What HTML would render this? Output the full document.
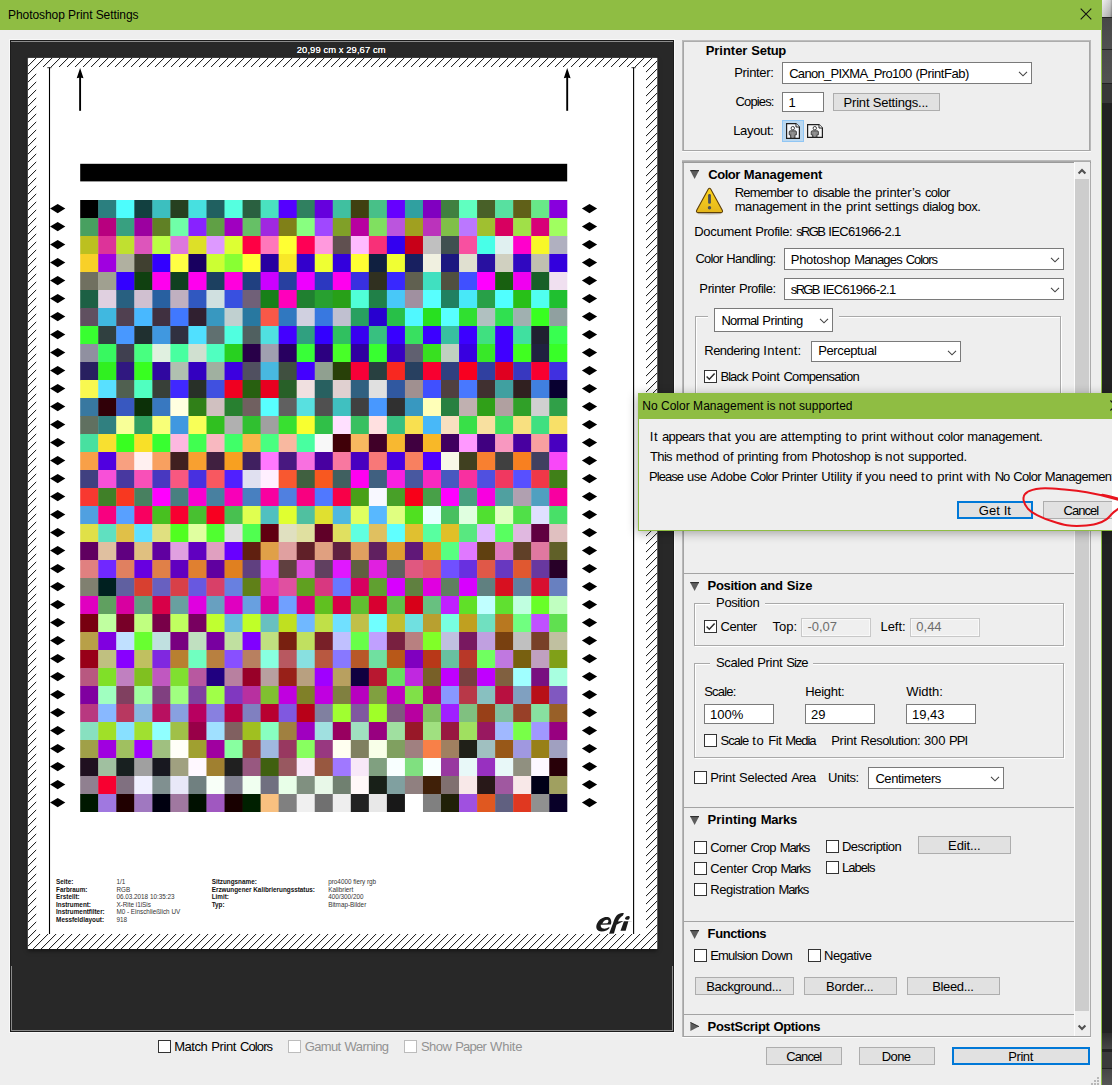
<!DOCTYPE html>
<html><head><meta charset="utf-8"><title>Photoshop Print Settings</title><style>
html,body{margin:0;padding:0;}
body{width:1118px;height:1085px;position:relative;overflow:hidden;background:#fff;font-family:"Liberation Sans",sans-serif;}
.a{position:absolute;display:block;}
.t{position:absolute;white-space:pre;color:#000;font-family:"Liberation Sans",sans-serif;}
</style></head><body>
<div class="a" style="left:0px;top:0px;width:1118px;height:1085px;background:#fff;"></div>
<div class="a" style="left:1102px;top:0px;width:10px;height:1085px;background:#222;"></div>
<div class="a" style="left:1102px;top:0px;width:10px;height:17px;background:linear-gradient(90deg,#e9e9e9,#c4c4c4 80%,#888);"></div>
<div class="a" style="left:1102px;top:0px;width:10px;height:17px;background:linear-gradient(rgba(255,255,255,0.25),rgba(0,0,0,0.12));"></div>
<div class="a" style="left:1102px;top:18px;width:10px;height:31px;background:linear-gradient(#474747,#505050);"></div>
<div class="a" style="left:1102px;top:50px;width:10px;height:33px;background:linear-gradient(#4b4b4b,#525252);"></div>
<div class="a" style="left:1102px;top:84px;width:10px;height:19px;background:#383838;"></div>
<div class="a" style="left:1102px;top:1033px;width:10px;height:16px;background:linear-gradient(#2c2c2c,#464646);"></div>
<div class="a" style="left:1102px;top:1052px;width:10px;height:16px;background:#3a3a3a;"></div>
<div class="a" style="left:1102px;top:1069px;width:10px;height:16px;background:linear-gradient(#454545,#565656);"></div>
<div class="a" style="left:0px;top:0px;width:1102px;height:1085px;background:#8fbd43;"></div>
<div class="a" style="left:0px;top:30px;width:1101px;height:1055px;background:#eeeeee;"></div>
<div class="t" style="left:8.00px;top:7.34px;font-size:12px;line-height:16px;letter-spacing:-0.066px;">Photoshop Print Settings</div>
<svg class="a" style="left:1080px;top:8px" width="12" height="12" viewBox="0 0 12 12"><path d="M0.7 0.7 L11.3 11.3 M11.3 0.7 L0.7 11.3" stroke="#111" stroke-width="1.1" fill="none"/></svg>
<!--PREVIEW-->
<!--RIGHT-->
<!--POPUP-->
<div class="a" style="left:9px;top:39px;width:666px;height:994px;background:#f8f8f8;"></div>
<div class="a" style="left:10px;top:40px;width:664px;height:992px;background:#282828;border:1px solid #1c1c1c;box-sizing:border-box;"></div>
<div class="a" style="left:11px;top:966px;width:1px;height:65px;background:#8a8a8a;"></div>
<div class="a" style="left:672px;top:966px;width:1px;height:65px;background:#8a8a8a;"></div>
<div class="a" style="left:11px;top:1030px;width:662px;height:1px;background:#8a8a8a;"></div>
<div class="a" style="left:11px;top:41px;width:662px;height:1px;background:#8c8c8c;"></div>
<div class="t" style="left:296.80px;top:43.64px;font-size:9.4px;line-height:12px;letter-spacing:0.092px;color:#fff;text-shadow:0 0 0.6px #fff;">20,99 cm x 29,67 cm</div>
<div class="a" style="left:28px;top:58px;width:629px;height:891px;background:#fff;box-shadow:0 2px 4px rgba(0,0,0,0.5);"></div>
<svg class="a" style="left:0;top:0" width="1118" height="1085" viewBox="0 0 1118 1085"><defs><pattern id="h" patternUnits="userSpaceOnUse" width="8" height="8" patternTransform="translate(6.1,0)"><path d="M-1 1 L1 -1 M-1 9 L9 -1 M7 9 L9 7" stroke="#000" stroke-width="0.95" fill="none"/></pattern><clipPath id="pc"><rect x="27.8" y="57.9" width="629.5" height="891"/></clipPath></defs><rect x="27.8" y="57.9" width="629.5" height="891" fill="#fff"/><path clip-path="url(#pc)" fill="url(#h)" fill-rule="evenodd" d="M27.8 57.9 H657.4 V948.9 H27.8 Z M36.2 66.9 V933.9 H646 V66.9 Z"/><path d="M49.5 67.5 V933.9 M633.6 67.5 V933.9" stroke="#000" stroke-width="1.1" fill="none"/><path d="M47.3 67.7 H51.5 M631.5 67.7 H635.7" stroke="#000" stroke-width="0.8" fill="none"/><path d="M80.1 75 V110.8" stroke="#000" stroke-width="1.9" fill="none"/><path d="M80.1 68 L83.5 78.3 L80.1 77.5 L76.69999999999999 78.3 Z" fill="#000"/><path d="M567.2 75 V110.8" stroke="#000" stroke-width="1.9" fill="none"/><path d="M567.2 68 L570.6 78.3 L567.2 77.5 L563.8000000000001 78.3 Z" fill="#000"/><rect x="80.2" y="163.8" width="487" height="17.6" fill="#000"/><rect x="80.20" y="200.00" width="18.44" height="18.40" fill="#000000"/><rect x="98.24" y="200.00" width="18.44" height="18.40" fill="#2b7f7f"/><rect x="116.28" y="200.00" width="18.44" height="18.40" fill="#4dfdfd"/><rect x="134.32" y="200.00" width="18.44" height="18.40" fill="#124040"/><rect x="152.36" y="200.00" width="18.44" height="18.40" fill="#3cbfbf"/><rect x="170.40" y="200.00" width="18.44" height="18.40" fill="#264020"/><rect x="188.44" y="200.00" width="18.44" height="18.40" fill="#47e0e0"/><rect x="206.49" y="200.00" width="18.44" height="18.40" fill="#206060"/><rect x="224.53" y="200.00" width="18.44" height="18.40" fill="#55ffe0"/><rect x="242.57" y="200.00" width="18.44" height="18.40" fill="#2a6040"/><rect x="260.61" y="200.00" width="18.44" height="18.40" fill="#4ae2c0"/><rect x="278.65" y="200.00" width="18.44" height="18.40" fill="#5500ff"/><rect x="296.69" y="200.00" width="18.44" height="18.40" fill="#308060"/><rect x="314.73" y="200.00" width="18.44" height="18.40" fill="#6600dd"/><rect x="332.77" y="200.00" width="18.44" height="18.40" fill="#40c0a0"/><rect x="350.81" y="200.00" width="18.44" height="18.40" fill="#404010"/><rect x="368.85" y="200.00" width="18.44" height="18.40" fill="#48c088"/><rect x="386.89" y="200.00" width="18.44" height="18.40" fill="#6600ff"/><rect x="404.93" y="200.00" width="18.44" height="18.40" fill="#30a0a0"/><rect x="422.97" y="200.00" width="18.44" height="18.40" fill="#8000c0"/><rect x="441.01" y="200.00" width="18.44" height="18.40" fill="#408040"/><rect x="459.06" y="200.00" width="18.44" height="18.40" fill="#60ffc0"/><rect x="477.10" y="200.00" width="18.44" height="18.40" fill="#486028"/><rect x="495.14" y="200.00" width="18.44" height="18.40" fill="#58e0a0"/><rect x="513.18" y="200.00" width="18.44" height="18.40" fill="#606018"/><rect x="531.22" y="200.00" width="18.44" height="18.40" fill="#68e888"/><rect x="549.26" y="200.00" width="18.04" height="18.40" fill="#8800dd"/><rect x="80.20" y="218.00" width="18.44" height="18.40" fill="#48a060"/><rect x="98.24" y="218.00" width="18.44" height="18.40" fill="#b8007f"/><rect x="116.28" y="218.00" width="18.44" height="18.40" fill="#38a080"/><rect x="134.32" y="218.00" width="18.44" height="18.40" fill="#9c00a0"/><rect x="152.36" y="218.00" width="18.44" height="18.40" fill="#608025"/><rect x="170.40" y="218.00" width="18.44" height="18.40" fill="#70ffa8"/><rect x="188.44" y="218.00" width="18.44" height="18.40" fill="#8822ff"/><rect x="206.49" y="218.00" width="18.44" height="18.40" fill="#60a045"/><rect x="224.53" y="218.00" width="18.44" height="18.40" fill="#a000c0"/><rect x="242.57" y="218.00" width="18.44" height="18.40" fill="#66c066"/><rect x="260.61" y="218.00" width="18.44" height="18.40" fill="#a028e0"/><rect x="278.65" y="218.00" width="18.44" height="18.40" fill="#808018"/><rect x="296.69" y="218.00" width="18.44" height="18.40" fill="#88ff80"/><rect x="314.73" y="218.00" width="18.44" height="18.40" fill="#a048ff"/><rect x="332.77" y="218.00" width="18.44" height="18.40" fill="#80a028"/><rect x="350.81" y="218.00" width="18.44" height="18.40" fill="#b800a0"/><rect x="368.85" y="218.00" width="18.44" height="18.40" fill="#80e060"/><rect x="386.89" y="218.00" width="18.44" height="18.40" fill="#bb55dd"/><rect x="404.93" y="218.00" width="18.44" height="18.40" fill="#a0a020"/><rect x="422.97" y="218.00" width="18.44" height="18.40" fill="#bb33bb"/><rect x="441.01" y="218.00" width="18.44" height="18.40" fill="#80c048"/><rect x="459.06" y="218.00" width="18.44" height="18.40" fill="#bb77ff"/><rect x="477.10" y="218.00" width="18.44" height="18.40" fill="#a0c030"/><rect x="495.14" y="218.00" width="18.44" height="18.40" fill="#d80060"/><rect x="513.18" y="218.00" width="18.44" height="18.40" fill="#a0e048"/><rect x="531.22" y="218.00" width="18.44" height="18.40" fill="#d80078"/><rect x="549.26" y="218.00" width="18.04" height="18.40" fill="#a0ff60"/><rect x="80.20" y="236.00" width="18.44" height="18.40" fill="#bcc020"/><rect x="98.24" y="236.00" width="18.44" height="18.40" fill="#dd3399"/><rect x="116.28" y="236.00" width="18.44" height="18.40" fill="#c0e030"/><rect x="134.32" y="236.00" width="18.44" height="18.40" fill="#dd55bb"/><rect x="152.36" y="236.00" width="18.44" height="18.40" fill="#bbff44"/><rect x="170.40" y="236.00" width="18.44" height="18.40" fill="#dd77dd"/><rect x="188.44" y="236.00" width="18.44" height="18.40" fill="#dde028"/><rect x="206.49" y="236.00" width="18.44" height="18.40" fill="#dd99ff"/><rect x="224.53" y="236.00" width="18.44" height="18.40" fill="#ddff33"/><rect x="242.57" y="236.00" width="18.44" height="18.40" fill="#ff0044"/><rect x="260.61" y="236.00" width="18.44" height="18.40" fill="#ff77bb"/><rect x="278.65" y="236.00" width="18.44" height="18.40" fill="#ffff33"/><rect x="296.69" y="236.00" width="18.44" height="18.40" fill="#ff0055"/><rect x="314.73" y="236.00" width="18.44" height="18.40" fill="#ff99dd"/><rect x="332.77" y="236.00" width="18.44" height="18.40" fill="#605050"/><rect x="350.81" y="236.00" width="18.44" height="18.40" fill="#ffbbff"/><rect x="368.85" y="236.00" width="18.44" height="18.40" fill="#f83078"/><rect x="386.89" y="236.00" width="18.44" height="18.40" fill="#3300f0"/><rect x="404.93" y="236.00" width="18.44" height="18.40" fill="#c80018"/><rect x="422.97" y="236.00" width="18.44" height="18.40" fill="#c0c0c0"/><rect x="441.01" y="236.00" width="18.44" height="18.40" fill="#405050"/><rect x="459.06" y="236.00" width="18.44" height="18.40" fill="#f850a0"/><rect x="477.10" y="236.00" width="18.44" height="18.40" fill="#48ffe8"/><rect x="495.14" y="236.00" width="18.44" height="18.40" fill="#e0f0f0"/><rect x="513.18" y="236.00" width="18.44" height="18.40" fill="#ff00cc"/><rect x="531.22" y="236.00" width="18.44" height="18.40" fill="#f8f828"/><rect x="549.26" y="236.00" width="18.04" height="18.40" fill="#b0b0c0"/><rect x="80.20" y="254.00" width="18.44" height="18.40" fill="#f8d028"/><rect x="98.24" y="254.00" width="18.44" height="18.40" fill="#a000e0"/><rect x="116.28" y="254.00" width="18.44" height="18.40" fill="#b0b0a0"/><rect x="134.32" y="254.00" width="18.44" height="18.40" fill="#404030"/><rect x="152.36" y="254.00" width="18.44" height="18.40" fill="#3300ff"/><rect x="170.40" y="254.00" width="18.44" height="18.40" fill="#ffff44"/><rect x="188.44" y="254.00" width="18.44" height="18.40" fill="#180060"/><rect x="206.49" y="254.00" width="18.44" height="18.40" fill="#ccff33"/><rect x="224.53" y="254.00" width="18.44" height="18.40" fill="#88ff33"/><rect x="242.57" y="254.00" width="18.44" height="18.40" fill="#ffff33"/><rect x="260.61" y="254.00" width="18.44" height="18.40" fill="#2800a0"/><rect x="278.65" y="254.00" width="18.44" height="18.40" fill="#f8e828"/><rect x="296.69" y="254.00" width="18.44" height="18.40" fill="#3300cc"/><rect x="314.73" y="254.00" width="18.44" height="18.40" fill="#eeff33"/><rect x="332.77" y="254.00" width="18.44" height="18.40" fill="#3300dd"/><rect x="350.81" y="254.00" width="18.44" height="18.40" fill="#ffff33"/><rect x="368.85" y="254.00" width="18.44" height="18.40" fill="#102040"/><rect x="386.89" y="254.00" width="18.44" height="18.40" fill="#f0ff33"/><rect x="404.93" y="254.00" width="18.44" height="18.40" fill="#182060"/><rect x="422.97" y="254.00" width="18.44" height="18.40" fill="#f0f0e0"/><rect x="441.01" y="254.00" width="18.44" height="18.40" fill="#1c1880"/><rect x="459.06" y="254.00" width="18.44" height="18.40" fill="#e0e0d0"/><rect x="477.10" y="254.00" width="18.44" height="18.40" fill="#2810a0"/><rect x="495.14" y="254.00" width="18.44" height="18.40" fill="#d0d0c0"/><rect x="513.18" y="254.00" width="18.44" height="18.40" fill="#3008c0"/><rect x="531.22" y="254.00" width="18.44" height="18.40" fill="#c0c0b0"/><rect x="549.26" y="254.00" width="18.04" height="18.40" fill="#3300dd"/><rect x="80.20" y="272.00" width="18.44" height="18.40" fill="#707060"/><rect x="98.24" y="272.00" width="18.44" height="18.40" fill="#a0a090"/><rect x="116.28" y="272.00" width="18.44" height="18.40" fill="#3300ff"/><rect x="134.32" y="272.00" width="18.44" height="18.40" fill="#104010"/><rect x="152.36" y="272.00" width="18.44" height="18.40" fill="#ff00ee"/><rect x="170.40" y="272.00" width="18.44" height="18.40" fill="#104020"/><rect x="188.44" y="272.00" width="18.44" height="18.40" fill="#ff00ee"/><rect x="206.49" y="272.00" width="18.44" height="18.40" fill="#1c4060"/><rect x="224.53" y="272.00" width="18.44" height="18.40" fill="#ff00dd"/><rect x="242.57" y="272.00" width="18.44" height="18.40" fill="#204080"/><rect x="260.61" y="272.00" width="18.44" height="18.40" fill="#cc00ff"/><rect x="278.65" y="272.00" width="18.44" height="18.40" fill="#2840a0"/><rect x="296.69" y="272.00" width="18.44" height="18.40" fill="#ee00ff"/><rect x="314.73" y="272.00" width="18.44" height="18.40" fill="#2c38c0"/><rect x="332.77" y="272.00" width="18.44" height="18.40" fill="#ff00ee"/><rect x="350.81" y="272.00" width="18.44" height="18.40" fill="#3830e0"/><rect x="368.85" y="272.00" width="18.44" height="18.40" fill="#303020"/><rect x="386.89" y="272.00" width="18.44" height="18.40" fill="#3828ff"/><rect x="404.93" y="272.00" width="18.44" height="18.40" fill="#606050"/><rect x="422.97" y="272.00" width="18.44" height="18.40" fill="#40e0c0"/><rect x="441.01" y="272.00" width="18.44" height="18.40" fill="#505040"/><rect x="459.06" y="272.00" width="18.44" height="18.40" fill="#4050ff"/><rect x="477.10" y="272.00" width="18.44" height="18.40" fill="#ff00ff"/><rect x="495.14" y="272.00" width="18.44" height="18.40" fill="#186010"/><rect x="513.18" y="272.00" width="18.44" height="18.40" fill="#f000f0"/><rect x="531.22" y="272.00" width="18.44" height="18.40" fill="#186028"/><rect x="549.26" y="272.00" width="18.04" height="18.40" fill="#f0e0f0"/><rect x="80.20" y="290.00" width="18.44" height="18.40" fill="#1c6044"/><rect x="98.24" y="290.00" width="18.44" height="18.40" fill="#e0d0e0"/><rect x="116.28" y="290.00" width="18.44" height="18.40" fill="#286080"/><rect x="134.32" y="290.00" width="18.44" height="18.40" fill="#d0c0d0"/><rect x="152.36" y="290.00" width="18.44" height="18.40" fill="#2860a0"/><rect x="170.40" y="290.00" width="18.44" height="18.40" fill="#c0b0c0"/><rect x="188.44" y="290.00" width="18.44" height="18.40" fill="#3058c0"/><rect x="206.49" y="290.00" width="18.44" height="18.40" fill="#d0e0e0"/><rect x="224.53" y="290.00" width="18.44" height="18.40" fill="#3850e0"/><rect x="242.57" y="290.00" width="18.44" height="18.40" fill="#706078"/><rect x="260.61" y="290.00" width="18.44" height="18.40" fill="#188018"/><rect x="278.65" y="290.00" width="18.44" height="18.40" fill="#ff00bb"/><rect x="296.69" y="290.00" width="18.44" height="18.40" fill="#208030"/><rect x="314.73" y="290.00" width="18.44" height="18.40" fill="#28a030"/><rect x="332.77" y="290.00" width="18.44" height="18.40" fill="#28a018"/><rect x="350.81" y="290.00" width="18.44" height="18.40" fill="#50ffd8"/><rect x="368.85" y="290.00" width="18.44" height="18.40" fill="#208048"/><rect x="386.89" y="290.00" width="18.44" height="18.40" fill="#48c8f8"/><rect x="404.93" y="290.00" width="18.44" height="18.40" fill="#a090a0"/><rect x="422.97" y="290.00" width="18.44" height="18.40" fill="#58ffff"/><rect x="441.01" y="290.00" width="18.44" height="18.40" fill="#208060"/><rect x="459.06" y="290.00" width="18.44" height="18.40" fill="#48e8f8"/><rect x="477.10" y="290.00" width="18.44" height="18.40" fill="#28a048"/><rect x="495.14" y="290.00" width="18.44" height="18.40" fill="#50ffff"/><rect x="513.18" y="290.00" width="18.44" height="18.40" fill="#28c018"/><rect x="531.22" y="290.00" width="18.44" height="18.40" fill="#50fff0"/><rect x="549.26" y="290.00" width="18.04" height="18.40" fill="#20c030"/><rect x="80.20" y="308.00" width="18.44" height="18.40" fill="#605060"/><rect x="98.24" y="308.00" width="18.44" height="18.40" fill="#40b8e0"/><rect x="116.28" y="308.00" width="18.44" height="18.40" fill="#504050"/><rect x="134.32" y="308.00" width="18.44" height="18.40" fill="#48b8ff"/><rect x="152.36" y="308.00" width="18.44" height="18.40" fill="#403040"/><rect x="170.40" y="308.00" width="18.44" height="18.40" fill="#4078ff"/><rect x="188.44" y="308.00" width="18.44" height="18.40" fill="#302030"/><rect x="206.49" y="308.00" width="18.44" height="18.40" fill="#3898c0"/><rect x="224.53" y="308.00" width="18.44" height="18.40" fill="#c0d0d0"/><rect x="242.57" y="308.00" width="18.44" height="18.40" fill="#2878a0"/><rect x="260.61" y="308.00" width="18.44" height="18.40" fill="#f85848"/><rect x="278.65" y="308.00" width="18.44" height="18.40" fill="#3078c0"/><rect x="296.69" y="308.00" width="18.44" height="18.40" fill="#d0d0e0"/><rect x="314.73" y="308.00" width="18.44" height="18.40" fill="#3878e0"/><rect x="332.77" y="308.00" width="18.44" height="18.40" fill="#c0c0d0"/><rect x="350.81" y="308.00" width="18.44" height="18.40" fill="#28a060"/><rect x="368.85" y="308.00" width="18.44" height="18.40" fill="#2800d0"/><rect x="386.89" y="308.00" width="18.44" height="18.40" fill="#28c048"/><rect x="404.93" y="308.00" width="18.44" height="18.40" fill="#50f8ff"/><rect x="422.97" y="308.00" width="18.44" height="18.40" fill="#28e020"/><rect x="441.01" y="308.00" width="18.44" height="18.40" fill="#58ffff"/><rect x="459.06" y="308.00" width="18.44" height="18.40" fill="#30e030"/><rect x="477.10" y="308.00" width="18.44" height="18.40" fill="#b0c0c0"/><rect x="495.14" y="308.00" width="18.44" height="18.40" fill="#30e050"/><rect x="513.18" y="308.00" width="18.44" height="18.40" fill="#a0b0b0"/><rect x="531.22" y="308.00" width="18.44" height="18.40" fill="#38ff20"/><rect x="549.26" y="308.00" width="18.04" height="18.40" fill="#90a0a0"/><rect x="80.20" y="326.00" width="18.44" height="18.40" fill="#38ff30"/><rect x="98.24" y="326.00" width="18.44" height="18.40" fill="#304040"/><rect x="116.28" y="326.00" width="18.44" height="18.40" fill="#4898ff"/><rect x="134.32" y="326.00" width="18.44" height="18.40" fill="#203030"/><rect x="152.36" y="326.00" width="18.44" height="18.40" fill="#4098e0"/><rect x="170.40" y="326.00" width="18.44" height="18.40" fill="#303040"/><rect x="188.44" y="326.00" width="18.44" height="18.40" fill="#50e0ff"/><rect x="206.49" y="326.00" width="18.44" height="18.40" fill="#607070"/><rect x="224.53" y="326.00" width="18.44" height="18.40" fill="#50ffe0"/><rect x="242.57" y="326.00" width="18.44" height="18.40" fill="#506060"/><rect x="260.61" y="326.00" width="18.44" height="18.40" fill="#50e0e0"/><rect x="278.65" y="326.00" width="18.44" height="18.40" fill="#4400ff"/><rect x="296.69" y="326.00" width="18.44" height="18.40" fill="#30a080"/><rect x="314.73" y="326.00" width="18.44" height="18.40" fill="#3300ff"/><rect x="332.77" y="326.00" width="18.44" height="18.40" fill="#30c060"/><rect x="350.81" y="326.00" width="18.44" height="18.40" fill="#3800f0"/><rect x="368.85" y="326.00" width="18.44" height="18.40" fill="#38c080"/><rect x="386.89" y="326.00" width="18.44" height="18.40" fill="#3800ff"/><rect x="404.93" y="326.00" width="18.44" height="18.40" fill="#38e060"/><rect x="422.97" y="326.00" width="18.44" height="18.40" fill="#3c00ff"/><rect x="441.01" y="326.00" width="18.44" height="18.40" fill="#38c0a0"/><rect x="459.06" y="326.00" width="18.44" height="18.40" fill="#3c00ff"/><rect x="477.10" y="326.00" width="18.44" height="18.40" fill="#40e080"/><rect x="495.14" y="326.00" width="18.44" height="18.40" fill="#4000ff"/><rect x="513.18" y="326.00" width="18.44" height="18.40" fill="#40e0a0"/><rect x="531.22" y="326.00" width="18.44" height="18.40" fill="#202030"/><rect x="549.26" y="326.00" width="18.04" height="18.40" fill="#38ff50"/><rect x="80.20" y="344.00" width="18.44" height="18.40" fill="#9090a0"/><rect x="98.24" y="344.00" width="18.44" height="18.40" fill="#38f860"/><rect x="116.28" y="344.00" width="18.44" height="18.40" fill="#404050"/><rect x="134.32" y="344.00" width="18.44" height="18.40" fill="#48ff80"/><rect x="152.36" y="344.00" width="18.44" height="18.40" fill="#e0f0e0"/><rect x="170.40" y="344.00" width="18.44" height="18.40" fill="#48ffa0"/><rect x="188.44" y="344.00" width="18.44" height="18.40" fill="#d0e0d0"/><rect x="206.49" y="344.00" width="18.44" height="18.40" fill="#50ffc0"/><rect x="224.53" y="344.00" width="18.44" height="18.40" fill="#28d020"/><rect x="242.57" y="344.00" width="18.44" height="18.40" fill="#280048"/><rect x="260.61" y="344.00" width="18.44" height="18.40" fill="#a0a0b0"/><rect x="278.65" y="344.00" width="18.44" height="18.40" fill="#280060"/><rect x="296.69" y="344.00" width="18.44" height="18.40" fill="#38ff38"/><rect x="314.73" y="344.00" width="18.44" height="18.40" fill="#2c0080"/><rect x="332.77" y="344.00" width="18.44" height="18.40" fill="#48ff28"/><rect x="350.81" y="344.00" width="18.44" height="18.40" fill="#3000a0"/><rect x="368.85" y="344.00" width="18.44" height="18.40" fill="#38ff30"/><rect x="386.89" y="344.00" width="18.44" height="18.40" fill="#3800c0"/><rect x="404.93" y="344.00" width="18.44" height="18.40" fill="#606070"/><rect x="422.97" y="344.00" width="18.44" height="18.40" fill="#38e020"/><rect x="441.01" y="344.00" width="18.44" height="18.40" fill="#c0d0c0"/><rect x="459.06" y="344.00" width="18.44" height="18.40" fill="#3800e0"/><rect x="477.10" y="344.00" width="18.44" height="18.40" fill="#38e828"/><rect x="495.14" y="344.00" width="18.44" height="18.40" fill="#4000ff"/><rect x="513.18" y="344.00" width="18.44" height="18.40" fill="#40ff20"/><rect x="531.22" y="344.00" width="18.44" height="18.40" fill="#202040"/><rect x="549.26" y="344.00" width="18.04" height="18.40" fill="#38ff28"/><rect x="80.20" y="362.00" width="18.44" height="18.40" fill="#282060"/><rect x="98.24" y="362.00" width="18.44" height="18.40" fill="#30f020"/><rect x="116.28" y="362.00" width="18.44" height="18.40" fill="#301880"/><rect x="134.32" y="362.00" width="18.44" height="18.40" fill="#38ff20"/><rect x="152.36" y="362.00" width="18.44" height="18.40" fill="#3008a0"/><rect x="170.40" y="362.00" width="18.44" height="18.40" fill="#b0c0b0"/><rect x="188.44" y="362.00" width="18.44" height="18.40" fill="#3300c0"/><rect x="206.49" y="362.00" width="18.44" height="18.40" fill="#a0b0a0"/><rect x="224.53" y="362.00" width="18.44" height="18.40" fill="#3c00e0"/><rect x="242.57" y="362.00" width="18.44" height="18.40" fill="#505060"/><rect x="260.61" y="362.00" width="18.44" height="18.40" fill="#48b8e0"/><rect x="278.65" y="362.00" width="18.44" height="18.40" fill="#405040"/><rect x="296.69" y="362.00" width="18.44" height="18.40" fill="#4400ff"/><rect x="314.73" y="362.00" width="18.44" height="18.40" fill="#90a090"/><rect x="332.77" y="362.00" width="18.44" height="18.40" fill="#284008"/><rect x="350.81" y="362.00" width="18.44" height="18.40" fill="#f80038"/><rect x="368.85" y="362.00" width="18.44" height="18.40" fill="#284040"/><rect x="386.89" y="362.00" width="18.44" height="18.40" fill="#f82820"/><rect x="404.93" y="362.00" width="18.44" height="18.40" fill="#284060"/><rect x="422.97" y="362.00" width="18.44" height="18.40" fill="#f80030"/><rect x="441.01" y="362.00" width="18.44" height="18.40" fill="#304080"/><rect x="459.06" y="362.00" width="18.44" height="18.40" fill="#f80020"/><rect x="477.10" y="362.00" width="18.44" height="18.40" fill="#3040a0"/><rect x="495.14" y="362.00" width="18.44" height="18.40" fill="#e00020"/><rect x="513.18" y="362.00" width="18.44" height="18.40" fill="#3838c0"/><rect x="531.22" y="362.00" width="18.44" height="18.40" fill="#f80030"/><rect x="549.26" y="362.00" width="18.04" height="18.40" fill="#4030e0"/><rect x="80.20" y="380.00" width="18.44" height="18.40" fill="#f8f850"/><rect x="98.24" y="380.00" width="18.44" height="18.40" fill="#58e0ff"/><rect x="116.28" y="380.00" width="18.44" height="18.40" fill="#506050"/><rect x="134.32" y="380.00" width="18.44" height="18.40" fill="#50ffc0"/><rect x="152.36" y="380.00" width="18.44" height="18.40" fill="#384038"/><rect x="170.40" y="380.00" width="18.44" height="18.40" fill="#4028ff"/><rect x="188.44" y="380.00" width="18.44" height="18.40" fill="#283028"/><rect x="206.49" y="380.00" width="18.44" height="18.40" fill="#4050e0"/><rect x="224.53" y="380.00" width="18.44" height="18.40" fill="#f00020"/><rect x="242.57" y="380.00" width="18.44" height="18.40" fill="#286010"/><rect x="260.61" y="380.00" width="18.44" height="18.40" fill="#e80020"/><rect x="278.65" y="380.00" width="18.44" height="18.40" fill="#286028"/><rect x="296.69" y="380.00" width="18.44" height="18.40" fill="#f0e0e0"/><rect x="314.73" y="380.00" width="18.44" height="18.40" fill="#286060"/><rect x="332.77" y="380.00" width="18.44" height="18.40" fill="#e0d0d0"/><rect x="350.81" y="380.00" width="18.44" height="18.40" fill="#306080"/><rect x="368.85" y="380.00" width="18.44" height="18.40" fill="#e0e0e0"/><rect x="386.89" y="380.00" width="18.44" height="18.40" fill="#3058a0"/><rect x="404.93" y="380.00" width="18.44" height="18.40" fill="#a09090"/><rect x="422.97" y="380.00" width="18.44" height="18.40" fill="#4050ff"/><rect x="441.01" y="380.00" width="18.44" height="18.40" fill="#504040"/><rect x="459.06" y="380.00" width="18.44" height="18.40" fill="#4878ff"/><rect x="477.10" y="380.00" width="18.44" height="18.40" fill="#403030"/><rect x="495.14" y="380.00" width="18.44" height="18.40" fill="#40a0a0"/><rect x="513.18" y="380.00" width="18.44" height="18.40" fill="#302020"/><rect x="531.22" y="380.00" width="18.44" height="18.40" fill="#4080e0"/><rect x="549.26" y="380.00" width="18.04" height="18.40" fill="#080030"/><rect x="80.20" y="398.00" width="18.44" height="18.40" fill="#3878a0"/><rect x="98.24" y="398.00" width="18.44" height="18.40" fill="#300008"/><rect x="116.28" y="398.00" width="18.44" height="18.40" fill="#3858c0"/><rect x="134.32" y="398.00" width="18.44" height="18.40" fill="#0c3008"/><rect x="152.36" y="398.00" width="18.44" height="18.40" fill="#3878c0"/><rect x="170.40" y="398.00" width="18.44" height="18.40" fill="#ffffe0"/><rect x="188.44" y="398.00" width="18.44" height="18.40" fill="#308018"/><rect x="206.49" y="398.00" width="18.44" height="18.40" fill="#d0c0c0"/><rect x="224.53" y="398.00" width="18.44" height="18.40" fill="#288030"/><rect x="242.57" y="398.00" width="18.44" height="18.40" fill="#706060"/><rect x="260.61" y="398.00" width="18.44" height="18.40" fill="#58ffff"/><rect x="278.65" y="398.00" width="18.44" height="18.40" fill="#606060"/><rect x="296.69" y="398.00" width="18.44" height="18.40" fill="#58e0e0"/><rect x="314.73" y="398.00" width="18.44" height="18.40" fill="#505050"/><rect x="332.77" y="398.00" width="18.44" height="18.40" fill="#40c0c0"/><rect x="350.81" y="398.00" width="18.44" height="18.40" fill="#404040"/><rect x="368.85" y="398.00" width="18.44" height="18.40" fill="#4898ff"/><rect x="386.89" y="398.00" width="18.44" height="18.40" fill="#303030"/><rect x="404.93" y="398.00" width="18.44" height="18.40" fill="#3898c0"/><rect x="422.97" y="398.00" width="18.44" height="18.40" fill="#ffffb8"/><rect x="441.01" y="398.00" width="18.44" height="18.40" fill="#288040"/><rect x="459.06" y="398.00" width="18.44" height="18.40" fill="#c0b0b0"/><rect x="477.10" y="398.00" width="18.44" height="18.40" fill="#30a018"/><rect x="495.14" y="398.00" width="18.44" height="18.40" fill="#b0a0a0"/><rect x="513.18" y="398.00" width="18.44" height="18.40" fill="#30a028"/><rect x="531.22" y="398.00" width="18.44" height="18.40" fill="#d0d0d0"/><rect x="549.26" y="398.00" width="18.04" height="18.40" fill="#30a048"/><rect x="80.20" y="416.00" width="18.44" height="18.40" fill="#607060"/><rect x="98.24" y="416.00" width="18.44" height="18.40" fill="#308080"/><rect x="116.28" y="416.00" width="18.44" height="18.40" fill="#f8ff98"/><rect x="134.32" y="416.00" width="18.44" height="18.40" fill="#30a060"/><rect x="152.36" y="416.00" width="18.44" height="18.40" fill="#f8ff78"/><rect x="170.40" y="416.00" width="18.44" height="18.40" fill="#4098e0"/><rect x="188.44" y="416.00" width="18.44" height="18.40" fill="#f8ff58"/><rect x="206.49" y="416.00" width="18.44" height="18.40" fill="#30c020"/><rect x="224.53" y="416.00" width="18.44" height="18.40" fill="#b0b0b0"/><rect x="242.57" y="416.00" width="18.44" height="18.40" fill="#30c030"/><rect x="260.61" y="416.00" width="18.44" height="18.40" fill="#a0a0a0"/><rect x="278.65" y="416.00" width="18.44" height="18.40" fill="#38e030"/><rect x="296.69" y="416.00" width="18.44" height="18.40" fill="#f8ff30"/><rect x="314.73" y="416.00" width="18.44" height="18.40" fill="#30c048"/><rect x="332.77" y="416.00" width="18.44" height="18.40" fill="#ffe0ff"/><rect x="350.81" y="416.00" width="18.44" height="18.40" fill="#38c060"/><rect x="368.85" y="416.00" width="18.44" height="18.40" fill="#ffe0e0"/><rect x="386.89" y="416.00" width="18.44" height="18.40" fill="#38c080"/><rect x="404.93" y="416.00" width="18.44" height="18.40" fill="#f8e050"/><rect x="422.97" y="416.00" width="18.44" height="18.40" fill="#48b8f8"/><rect x="441.01" y="416.00" width="18.44" height="18.40" fill="#f8e0c0"/><rect x="459.06" y="416.00" width="18.44" height="18.40" fill="#38e048"/><rect x="477.10" y="416.00" width="18.44" height="18.40" fill="#f8e0a0"/><rect x="495.14" y="416.00" width="18.44" height="18.40" fill="#40e060"/><rect x="513.18" y="416.00" width="18.44" height="18.40" fill="#f8e080"/><rect x="531.22" y="416.00" width="18.44" height="18.40" fill="#40e080"/><rect x="549.26" y="416.00" width="18.04" height="18.40" fill="#f8e068"/><rect x="80.20" y="434.00" width="18.44" height="18.40" fill="#48e0a0"/><rect x="98.24" y="434.00" width="18.44" height="18.40" fill="#f8e030"/><rect x="116.28" y="434.00" width="18.44" height="18.40" fill="#38ff20"/><rect x="134.32" y="434.00" width="18.44" height="18.40" fill="#f8e028"/><rect x="152.36" y="434.00" width="18.44" height="18.40" fill="#38ff30"/><rect x="170.40" y="434.00" width="18.44" height="18.40" fill="#fcb8e0"/><rect x="188.44" y="434.00" width="18.44" height="18.40" fill="#40ff50"/><rect x="206.49" y="434.00" width="18.44" height="18.40" fill="#f8b8c0"/><rect x="224.53" y="434.00" width="18.44" height="18.40" fill="#40ff68"/><rect x="242.57" y="434.00" width="18.44" height="18.40" fill="#f8b848"/><rect x="260.61" y="434.00" width="18.44" height="18.40" fill="#48ff80"/><rect x="278.65" y="434.00" width="18.44" height="18.40" fill="#f8b8a0"/><rect x="296.69" y="434.00" width="18.44" height="18.40" fill="#48ffa0"/><rect x="314.73" y="434.00" width="18.44" height="18.40" fill="#f8f8f8"/><rect x="332.77" y="434.00" width="18.44" height="18.40" fill="#400008"/><rect x="350.81" y="434.00" width="18.44" height="18.40" fill="#f8b860"/><rect x="368.85" y="434.00" width="18.44" height="18.40" fill="#400028"/><rect x="386.89" y="434.00" width="18.44" height="18.40" fill="#f8b830"/><rect x="404.93" y="434.00" width="18.44" height="18.40" fill="#400040"/><rect x="422.97" y="434.00" width="18.44" height="18.40" fill="#f8b828"/><rect x="441.01" y="434.00" width="18.44" height="18.40" fill="#400060"/><rect x="459.06" y="434.00" width="18.44" height="18.40" fill="#ff98ff"/><rect x="477.10" y="434.00" width="18.44" height="18.40" fill="#400080"/><rect x="495.14" y="434.00" width="18.44" height="18.40" fill="#f898c0"/><rect x="513.18" y="434.00" width="18.44" height="18.40" fill="#4800a0"/><rect x="531.22" y="434.00" width="18.44" height="18.40" fill="#f8a0a0"/><rect x="549.26" y="434.00" width="18.04" height="18.40" fill="#4800c0"/><rect x="80.20" y="452.00" width="18.44" height="18.40" fill="#f8a048"/><rect x="98.24" y="452.00" width="18.44" height="18.40" fill="#5000e0"/><rect x="116.28" y="452.00" width="18.44" height="18.40" fill="#f8a080"/><rect x="134.32" y="452.00" width="18.44" height="18.40" fill="#fff0f0"/><rect x="152.36" y="452.00" width="18.44" height="18.40" fill="#f8a060"/><rect x="170.40" y="452.00" width="18.44" height="18.40" fill="#402020"/><rect x="188.44" y="452.00" width="18.44" height="18.40" fill="#f8a030"/><rect x="206.49" y="452.00" width="18.44" height="18.40" fill="#402040"/><rect x="224.53" y="452.00" width="18.44" height="18.40" fill="#f8a020"/><rect x="242.57" y="452.00" width="18.44" height="18.40" fill="#402060"/><rect x="260.61" y="452.00" width="18.44" height="18.40" fill="#ff78ff"/><rect x="278.65" y="452.00" width="18.44" height="18.40" fill="#481880"/><rect x="296.69" y="452.00" width="18.44" height="18.40" fill="#f870e0"/><rect x="314.73" y="452.00" width="18.44" height="18.40" fill="#4800a0"/><rect x="332.77" y="452.00" width="18.44" height="18.40" fill="#f878a0"/><rect x="350.81" y="452.00" width="18.44" height="18.40" fill="#4800c0"/><rect x="368.85" y="452.00" width="18.44" height="18.40" fill="#f87878"/><rect x="386.89" y="452.00" width="18.44" height="18.40" fill="#4800e0"/><rect x="404.93" y="452.00" width="18.44" height="18.40" fill="#f88060"/><rect x="422.97" y="452.00" width="18.44" height="18.40" fill="#5000ff"/><rect x="441.01" y="452.00" width="18.44" height="18.40" fill="#f8f8e8"/><rect x="459.06" y="452.00" width="18.44" height="18.40" fill="#404020"/><rect x="477.10" y="452.00" width="18.44" height="18.40" fill="#f88030"/><rect x="495.14" y="452.00" width="18.44" height="18.40" fill="#404040"/><rect x="513.18" y="452.00" width="18.44" height="18.40" fill="#f88020"/><rect x="531.22" y="452.00" width="18.44" height="18.40" fill="#404060"/><rect x="549.26" y="452.00" width="18.04" height="18.40" fill="#f848f8"/><rect x="80.20" y="470.00" width="18.44" height="18.40" fill="#404080"/><rect x="98.24" y="470.00" width="18.44" height="18.40" fill="#f850d8"/><rect x="116.28" y="470.00" width="18.44" height="18.40" fill="#4838a0"/><rect x="134.32" y="470.00" width="18.44" height="18.40" fill="#f850b8"/><rect x="152.36" y="470.00" width="18.44" height="18.40" fill="#4838c0"/><rect x="170.40" y="470.00" width="18.44" height="18.40" fill="#f85880"/><rect x="188.44" y="470.00" width="18.44" height="18.40" fill="#4830e0"/><rect x="206.49" y="470.00" width="18.44" height="18.40" fill="#f85860"/><rect x="224.53" y="470.00" width="18.44" height="18.40" fill="#5020ff"/><rect x="242.57" y="470.00" width="18.44" height="18.40" fill="#e0e0f0"/><rect x="260.61" y="470.00" width="18.44" height="18.40" fill="#fff0ff"/><rect x="278.65" y="470.00" width="18.44" height="18.40" fill="#f85830"/><rect x="296.69" y="470.00" width="18.44" height="18.40" fill="#406040"/><rect x="314.73" y="470.00" width="18.44" height="18.40" fill="#f85820"/><rect x="332.77" y="470.00" width="18.44" height="18.40" fill="#406060"/><rect x="350.81" y="470.00" width="18.44" height="18.40" fill="#ff00f0"/><rect x="368.85" y="470.00" width="18.44" height="18.40" fill="#406080"/><rect x="386.89" y="470.00" width="18.44" height="18.40" fill="#f820e0"/><rect x="404.93" y="470.00" width="18.44" height="18.40" fill="#4858a0"/><rect x="422.97" y="470.00" width="18.44" height="18.40" fill="#f828c0"/><rect x="441.01" y="470.00" width="18.44" height="18.40" fill="#4858c0"/><rect x="459.06" y="470.00" width="18.44" height="18.40" fill="#f830a0"/><rect x="477.10" y="470.00" width="18.44" height="18.40" fill="#5050e0"/><rect x="495.14" y="470.00" width="18.44" height="18.40" fill="#f03860"/><rect x="513.18" y="470.00" width="18.44" height="18.40" fill="#5850ff"/><rect x="531.22" y="470.00" width="18.44" height="18.40" fill="#f03848"/><rect x="549.26" y="470.00" width="18.04" height="18.40" fill="#408018"/><rect x="80.20" y="488.00" width="18.44" height="18.40" fill="#f83830"/><rect x="98.24" y="488.00" width="18.44" height="18.40" fill="#408028"/><rect x="116.28" y="488.00" width="18.44" height="18.40" fill="#f83820"/><rect x="134.32" y="488.00" width="18.44" height="18.40" fill="#488060"/><rect x="152.36" y="488.00" width="18.44" height="18.40" fill="#ff00ff"/><rect x="170.40" y="488.00" width="18.44" height="18.40" fill="#488080"/><rect x="188.44" y="488.00" width="18.44" height="18.40" fill="#f800d0"/><rect x="206.49" y="488.00" width="18.44" height="18.40" fill="#4880a0"/><rect x="224.53" y="488.00" width="18.44" height="18.40" fill="#f800b8"/><rect x="242.57" y="488.00" width="18.44" height="18.40" fill="#4880c0"/><rect x="260.61" y="488.00" width="18.44" height="18.40" fill="#f800a0"/><rect x="278.65" y="488.00" width="18.44" height="18.40" fill="#5080e0"/><rect x="296.69" y="488.00" width="18.44" height="18.40" fill="#f80080"/><rect x="314.73" y="488.00" width="18.44" height="18.40" fill="#5078ff"/><rect x="332.77" y="488.00" width="18.44" height="18.40" fill="#f80048"/><rect x="350.81" y="488.00" width="18.44" height="18.40" fill="#48a018"/><rect x="368.85" y="488.00" width="18.44" height="18.40" fill="#f8f8ff"/><rect x="386.89" y="488.00" width="18.44" height="18.40" fill="#48a028"/><rect x="404.93" y="488.00" width="18.44" height="18.40" fill="#f80018"/><rect x="422.97" y="488.00" width="18.44" height="18.40" fill="#48a048"/><rect x="441.01" y="488.00" width="18.44" height="18.40" fill="#ff00ff"/><rect x="459.06" y="488.00" width="18.44" height="18.40" fill="#48a080"/><rect x="477.10" y="488.00" width="18.44" height="18.40" fill="#f800e0"/><rect x="495.14" y="488.00" width="18.44" height="18.40" fill="#50a0a0"/><rect x="513.18" y="488.00" width="18.44" height="18.40" fill="#b0a0b0"/><rect x="531.22" y="488.00" width="18.44" height="18.40" fill="#50a0c0"/><rect x="549.26" y="488.00" width="18.04" height="18.40" fill="#f800a0"/><rect x="80.20" y="506.00" width="18.44" height="18.40" fill="#50a0e0"/><rect x="98.24" y="506.00" width="18.44" height="18.40" fill="#f80080"/><rect x="116.28" y="506.00" width="18.44" height="18.40" fill="#58a0ff"/><rect x="134.32" y="506.00" width="18.44" height="18.40" fill="#f80060"/><rect x="152.36" y="506.00" width="18.44" height="18.40" fill="#48c020"/><rect x="170.40" y="506.00" width="18.44" height="18.40" fill="#f80030"/><rect x="188.44" y="506.00" width="18.44" height="18.40" fill="#48c030"/><rect x="206.49" y="506.00" width="18.44" height="18.40" fill="#f80020"/><rect x="224.53" y="506.00" width="18.44" height="18.40" fill="#48c050"/><rect x="242.57" y="506.00" width="18.44" height="18.40" fill="#e0ff50"/><rect x="260.61" y="506.00" width="18.44" height="18.40" fill="#50c0c0"/><rect x="278.65" y="506.00" width="18.44" height="18.40" fill="#e0ff30"/><rect x="296.69" y="506.00" width="18.44" height="18.40" fill="#50c0a0"/><rect x="314.73" y="506.00" width="18.44" height="18.40" fill="#e0e030"/><rect x="332.77" y="506.00" width="18.44" height="18.40" fill="#50b8e0"/><rect x="350.81" y="506.00" width="18.44" height="18.40" fill="#e0ff60"/><rect x="368.85" y="506.00" width="18.44" height="18.40" fill="#58b8ff"/><rect x="386.89" y="506.00" width="18.44" height="18.40" fill="#e0ff80"/><rect x="404.93" y="506.00" width="18.44" height="18.40" fill="#50e020"/><rect x="422.97" y="506.00" width="18.44" height="18.40" fill="#e8ffff"/><rect x="441.01" y="506.00" width="18.44" height="18.40" fill="#48c060"/><rect x="459.06" y="506.00" width="18.44" height="18.40" fill="#e0ffe0"/><rect x="477.10" y="506.00" width="18.44" height="18.40" fill="#50e030"/><rect x="495.14" y="506.00" width="18.44" height="18.40" fill="#e0ffc0"/><rect x="513.18" y="506.00" width="18.44" height="18.40" fill="#50e048"/><rect x="531.22" y="506.00" width="18.44" height="18.40" fill="#e0e0ff"/><rect x="549.26" y="506.00" width="18.04" height="18.40" fill="#48e068"/><rect x="80.20" y="524.00" width="18.44" height="18.40" fill="#e0e048"/><rect x="98.24" y="524.00" width="18.44" height="18.40" fill="#60e0c0"/><rect x="116.28" y="524.00" width="18.44" height="18.40" fill="#e0c048"/><rect x="134.32" y="524.00" width="18.44" height="18.40" fill="#60e0ff"/><rect x="152.36" y="524.00" width="18.44" height="18.40" fill="#e0e080"/><rect x="170.40" y="524.00" width="18.44" height="18.40" fill="#50ff20"/><rect x="188.44" y="524.00" width="18.44" height="18.40" fill="#e0ffa0"/><rect x="206.49" y="524.00" width="18.44" height="18.40" fill="#50ff30"/><rect x="224.53" y="524.00" width="18.44" height="18.40" fill="#e0e0e0"/><rect x="242.57" y="524.00" width="18.44" height="18.40" fill="#50ff50"/><rect x="260.61" y="524.00" width="18.44" height="18.40" fill="#600010"/><rect x="278.65" y="524.00" width="18.44" height="18.40" fill="#e0e0c0"/><rect x="296.69" y="524.00" width="18.44" height="18.40" fill="#e0e0a0"/><rect x="314.73" y="524.00" width="18.44" height="18.40" fill="#600028"/><rect x="332.77" y="524.00" width="18.44" height="18.40" fill="#e0e060"/><rect x="350.81" y="524.00" width="18.44" height="18.40" fill="#60ffe0"/><rect x="368.85" y="524.00" width="18.44" height="18.40" fill="#e0c060"/><rect x="386.89" y="524.00" width="18.44" height="18.40" fill="#60ffff"/><rect x="404.93" y="524.00" width="18.44" height="18.40" fill="#e0c030"/><rect x="422.97" y="524.00" width="18.44" height="18.40" fill="#58ffa0"/><rect x="441.01" y="524.00" width="18.44" height="18.40" fill="#e0c028"/><rect x="459.06" y="524.00" width="18.44" height="18.40" fill="#58e880"/><rect x="477.10" y="524.00" width="18.44" height="18.40" fill="#e0b8ff"/><rect x="495.14" y="524.00" width="18.44" height="18.40" fill="#58ff60"/><rect x="513.18" y="524.00" width="18.44" height="18.40" fill="#e0b8e0"/><rect x="531.22" y="524.00" width="18.44" height="18.40" fill="#600040"/><rect x="549.26" y="524.00" width="18.04" height="18.40" fill="#e0c0c0"/><rect x="80.20" y="542.00" width="18.44" height="18.40" fill="#600060"/><rect x="98.24" y="542.00" width="18.44" height="18.40" fill="#e0c0a0"/><rect x="116.28" y="542.00" width="18.44" height="18.40" fill="#600080"/><rect x="134.32" y="542.00" width="18.44" height="18.40" fill="#e0c080"/><rect x="152.36" y="542.00" width="18.44" height="18.40" fill="#6000a0"/><rect x="170.40" y="542.00" width="18.44" height="18.40" fill="#e0a0e0"/><rect x="188.44" y="542.00" width="18.44" height="18.40" fill="#6000c0"/><rect x="206.49" y="542.00" width="18.44" height="18.40" fill="#e0a0c0"/><rect x="224.53" y="542.00" width="18.44" height="18.40" fill="#6800ff"/><rect x="242.57" y="542.00" width="18.44" height="18.40" fill="#602010"/><rect x="260.61" y="542.00" width="18.44" height="18.40" fill="#e0a048"/><rect x="278.65" y="542.00" width="18.44" height="18.40" fill="#e0a0a0"/><rect x="296.69" y="542.00" width="18.44" height="18.40" fill="#602028"/><rect x="314.73" y="542.00" width="18.44" height="18.40" fill="#e0a080"/><rect x="332.77" y="542.00" width="18.44" height="18.40" fill="#602040"/><rect x="350.81" y="542.00" width="18.44" height="18.40" fill="#e0a060"/><rect x="368.85" y="542.00" width="18.44" height="18.40" fill="#602060"/><rect x="386.89" y="542.00" width="18.44" height="18.40" fill="#e0a030"/><rect x="404.93" y="542.00" width="18.44" height="18.40" fill="#601878"/><rect x="422.97" y="542.00" width="18.44" height="18.40" fill="#e0a020"/><rect x="441.01" y="542.00" width="18.44" height="18.40" fill="#58ff80"/><rect x="459.06" y="542.00" width="18.44" height="18.40" fill="#e078ff"/><rect x="477.10" y="542.00" width="18.44" height="18.40" fill="#604010"/><rect x="495.14" y="542.00" width="18.44" height="18.40" fill="#e078c0"/><rect x="513.18" y="542.00" width="18.44" height="18.40" fill="#604028"/><rect x="531.22" y="542.00" width="18.44" height="18.40" fill="#e078a0"/><rect x="549.26" y="542.00" width="18.04" height="18.40" fill="#606028"/><rect x="80.20" y="560.00" width="18.44" height="18.40" fill="#e08080"/><rect x="98.24" y="560.00" width="18.44" height="18.40" fill="#7028ff"/><rect x="116.28" y="560.00" width="18.44" height="18.40" fill="#e08060"/><rect x="134.32" y="560.00" width="18.44" height="18.40" fill="#6800e0"/><rect x="152.36" y="560.00" width="18.44" height="18.40" fill="#e08048"/><rect x="170.40" y="560.00" width="18.44" height="18.40" fill="#6000c0"/><rect x="188.44" y="560.00" width="18.44" height="18.40" fill="#e08030"/><rect x="206.49" y="560.00" width="18.44" height="18.40" fill="#6000a0"/><rect x="224.53" y="560.00" width="18.44" height="18.40" fill="#e08020"/><rect x="242.57" y="560.00" width="18.44" height="18.40" fill="#604080"/><rect x="260.61" y="560.00" width="18.44" height="18.40" fill="#e050ff"/><rect x="278.65" y="560.00" width="18.44" height="18.40" fill="#604040"/><rect x="296.69" y="560.00" width="18.44" height="18.40" fill="#e050e0"/><rect x="314.73" y="560.00" width="18.44" height="18.40" fill="#604060"/><rect x="332.77" y="560.00" width="18.44" height="18.40" fill="#e018ff"/><rect x="350.81" y="560.00" width="18.44" height="18.40" fill="#606040"/><rect x="368.85" y="560.00" width="18.44" height="18.40" fill="#e020e0"/><rect x="386.89" y="560.00" width="18.44" height="18.40" fill="#606060"/><rect x="404.93" y="560.00" width="18.44" height="18.40" fill="#e05880"/><rect x="422.97" y="560.00" width="18.44" height="18.40" fill="#e05860"/><rect x="441.01" y="560.00" width="18.44" height="18.40" fill="#7050ff"/><rect x="459.06" y="560.00" width="18.44" height="18.40" fill="#6830e0"/><rect x="477.10" y="560.00" width="18.44" height="18.40" fill="#e05848"/><rect x="495.14" y="560.00" width="18.44" height="18.40" fill="#6838c0"/><rect x="513.18" y="560.00" width="18.44" height="18.40" fill="#e05830"/><rect x="531.22" y="560.00" width="18.44" height="18.40" fill="#6838a0"/><rect x="549.26" y="560.00" width="18.04" height="18.40" fill="#280028"/><rect x="80.20" y="578.00" width="18.44" height="18.40" fill="#808070"/><rect x="98.24" y="578.00" width="18.44" height="18.40" fill="#002020"/><rect x="116.28" y="578.00" width="18.44" height="18.40" fill="#6060a0"/><rect x="134.32" y="578.00" width="18.44" height="18.40" fill="#d84030"/><rect x="152.36" y="578.00" width="18.44" height="18.40" fill="#6860c0"/><rect x="170.40" y="578.00" width="18.44" height="18.40" fill="#d84048"/><rect x="188.44" y="578.00" width="18.44" height="18.40" fill="#6858e0"/><rect x="206.49" y="578.00" width="18.44" height="18.40" fill="#d84068"/><rect x="224.53" y="578.00" width="18.44" height="18.40" fill="#6880e0"/><rect x="242.57" y="578.00" width="18.44" height="18.40" fill="#608018"/><rect x="260.61" y="578.00" width="18.44" height="18.40" fill="#e030c0"/><rect x="278.65" y="578.00" width="18.44" height="18.40" fill="#e050a0"/><rect x="296.69" y="578.00" width="18.44" height="18.40" fill="#60a020"/><rect x="314.73" y="578.00" width="18.44" height="18.40" fill="#d83880"/><rect x="332.77" y="578.00" width="18.44" height="18.40" fill="#6878ff"/><rect x="350.81" y="578.00" width="18.44" height="18.40" fill="#d80060"/><rect x="368.85" y="578.00" width="18.44" height="18.40" fill="#60a030"/><rect x="386.89" y="578.00" width="18.44" height="18.40" fill="#d800ff"/><rect x="404.93" y="578.00" width="18.44" height="18.40" fill="#608040"/><rect x="422.97" y="578.00" width="18.44" height="18.40" fill="#e000e0"/><rect x="441.01" y="578.00" width="18.44" height="18.40" fill="#608060"/><rect x="459.06" y="578.00" width="18.44" height="18.40" fill="#d800ff"/><rect x="477.10" y="578.00" width="18.44" height="18.40" fill="#608080"/><rect x="495.14" y="578.00" width="18.44" height="18.40" fill="#d81020"/><rect x="513.18" y="578.00" width="18.44" height="18.40" fill="#6080a0"/><rect x="531.22" y="578.00" width="18.44" height="18.40" fill="#d81030"/><rect x="549.26" y="578.00" width="18.04" height="18.40" fill="#6880c0"/><rect x="80.20" y="596.00" width="18.44" height="18.40" fill="#e000c0"/><rect x="98.24" y="596.00" width="18.44" height="18.40" fill="#60a060"/><rect x="116.28" y="596.00" width="18.44" height="18.40" fill="#d800a0"/><rect x="134.32" y="596.00" width="18.44" height="18.40" fill="#60a080"/><rect x="152.36" y="596.00" width="18.44" height="18.40" fill="#d80048"/><rect x="170.40" y="596.00" width="18.44" height="18.40" fill="#68a0a0"/><rect x="188.44" y="596.00" width="18.44" height="18.40" fill="#e000e0"/><rect x="206.49" y="596.00" width="18.44" height="18.40" fill="#68a0c0"/><rect x="224.53" y="596.00" width="18.44" height="18.40" fill="#e000c0"/><rect x="242.57" y="596.00" width="18.44" height="18.40" fill="#68a0e0"/><rect x="260.61" y="596.00" width="18.44" height="18.40" fill="#d800a0"/><rect x="278.65" y="596.00" width="18.44" height="18.40" fill="#70a0ff"/><rect x="296.69" y="596.00" width="18.44" height="18.40" fill="#d80080"/><rect x="314.73" y="596.00" width="18.44" height="18.40" fill="#60c020"/><rect x="332.77" y="596.00" width="18.44" height="18.40" fill="#d80048"/><rect x="350.81" y="596.00" width="18.44" height="18.40" fill="#60c030"/><rect x="368.85" y="596.00" width="18.44" height="18.40" fill="#d80030"/><rect x="386.89" y="596.00" width="18.44" height="18.40" fill="#60c048"/><rect x="404.93" y="596.00" width="18.44" height="18.40" fill="#d80018"/><rect x="422.97" y="596.00" width="18.44" height="18.40" fill="#68c080"/><rect x="441.01" y="596.00" width="18.44" height="18.40" fill="#c020ff"/><rect x="459.06" y="596.00" width="18.44" height="18.40" fill="#60e028"/><rect x="477.10" y="596.00" width="18.44" height="18.40" fill="#c0ffff"/><rect x="495.14" y="596.00" width="18.44" height="18.40" fill="#60e030"/><rect x="513.18" y="596.00" width="18.44" height="18.40" fill="#c0ffe0"/><rect x="531.22" y="596.00" width="18.44" height="18.40" fill="#68ff28"/><rect x="549.26" y="596.00" width="18.04" height="18.40" fill="#c0ffc0"/><rect x="80.20" y="614.00" width="18.44" height="18.40" fill="#780010"/><rect x="98.24" y="614.00" width="18.44" height="18.40" fill="#c0ffa0"/><rect x="116.28" y="614.00" width="18.44" height="18.40" fill="#780028"/><rect x="134.32" y="614.00" width="18.44" height="18.40" fill="#c0ff80"/><rect x="152.36" y="614.00" width="18.44" height="18.40" fill="#780048"/><rect x="170.40" y="614.00" width="18.44" height="18.40" fill="#c0ff60"/><rect x="188.44" y="614.00" width="18.44" height="18.40" fill="#780060"/><rect x="206.49" y="614.00" width="18.44" height="18.40" fill="#c0ff30"/><rect x="224.53" y="614.00" width="18.44" height="18.40" fill="#68b8e0"/><rect x="242.57" y="614.00" width="18.44" height="18.40" fill="#c0ff28"/><rect x="260.61" y="614.00" width="18.44" height="18.40" fill="#68c0c0"/><rect x="278.65" y="614.00" width="18.44" height="18.40" fill="#c0e020"/><rect x="296.69" y="614.00" width="18.44" height="18.40" fill="#70b8ff"/><rect x="314.73" y="614.00" width="18.44" height="18.40" fill="#c0e048"/><rect x="332.77" y="614.00" width="18.44" height="18.40" fill="#70e0ff"/><rect x="350.81" y="614.00" width="18.44" height="18.40" fill="#c0c048"/><rect x="368.85" y="614.00" width="18.44" height="18.40" fill="#70ffff"/><rect x="386.89" y="614.00" width="18.44" height="18.40" fill="#c0c030"/><rect x="404.93" y="614.00" width="18.44" height="18.40" fill="#70e0e0"/><rect x="422.97" y="614.00" width="18.44" height="18.40" fill="#b8a030"/><rect x="441.01" y="614.00" width="18.44" height="18.40" fill="#78ffe0"/><rect x="459.06" y="614.00" width="18.44" height="18.40" fill="#c0a020"/><rect x="477.10" y="614.00" width="18.44" height="18.40" fill="#70e0c0"/><rect x="495.14" y="614.00" width="18.44" height="18.40" fill="#b87820"/><rect x="513.18" y="614.00" width="18.44" height="18.40" fill="#70ff80"/><rect x="531.22" y="614.00" width="18.44" height="18.40" fill="#c050ff"/><rect x="549.26" y="614.00" width="18.04" height="18.40" fill="#60e050"/><rect x="80.20" y="632.00" width="18.44" height="18.40" fill="#b8a048"/><rect x="98.24" y="632.00" width="18.44" height="18.40" fill="#8000e0"/><rect x="116.28" y="632.00" width="18.44" height="18.40" fill="#c0e0ff"/><rect x="134.32" y="632.00" width="18.44" height="18.40" fill="#68ff30"/><rect x="152.36" y="632.00" width="18.44" height="18.40" fill="#c0e0e0"/><rect x="170.40" y="632.00" width="18.44" height="18.40" fill="#780080"/><rect x="188.44" y="632.00" width="18.44" height="18.40" fill="#c0e0c0"/><rect x="206.49" y="632.00" width="18.44" height="18.40" fill="#7800a0"/><rect x="224.53" y="632.00" width="18.44" height="18.40" fill="#c0e0a0"/><rect x="242.57" y="632.00" width="18.44" height="18.40" fill="#8000ff"/><rect x="260.61" y="632.00" width="18.44" height="18.40" fill="#c0e080"/><rect x="278.65" y="632.00" width="18.44" height="18.40" fill="#782010"/><rect x="296.69" y="632.00" width="18.44" height="18.40" fill="#c0e060"/><rect x="314.73" y="632.00" width="18.44" height="18.40" fill="#782028"/><rect x="332.77" y="632.00" width="18.44" height="18.40" fill="#c0c0ff"/><rect x="350.81" y="632.00" width="18.44" height="18.40" fill="#68ff48"/><rect x="368.85" y="632.00" width="18.44" height="18.40" fill="#c0a0ff"/><rect x="386.89" y="632.00" width="18.44" height="18.40" fill="#782040"/><rect x="404.93" y="632.00" width="18.44" height="18.40" fill="#b88080"/><rect x="422.97" y="632.00" width="18.44" height="18.40" fill="#80ff28"/><rect x="441.01" y="632.00" width="18.44" height="18.40" fill="#c0c0e0"/><rect x="459.06" y="632.00" width="18.44" height="18.40" fill="#781860"/><rect x="477.10" y="632.00" width="18.44" height="18.40" fill="#c0a0e0"/><rect x="495.14" y="632.00" width="18.44" height="18.40" fill="#784010"/><rect x="513.18" y="632.00" width="18.44" height="18.40" fill="#c0c0c0"/><rect x="531.22" y="632.00" width="18.44" height="18.40" fill="#784028"/><rect x="549.26" y="632.00" width="18.04" height="18.40" fill="#c0c0a0"/><rect x="80.20" y="650.00" width="18.44" height="18.40" fill="#980018"/><rect x="98.24" y="650.00" width="18.44" height="18.40" fill="#c0c080"/><rect x="116.28" y="650.00" width="18.44" height="18.40" fill="#8800ff"/><rect x="134.32" y="650.00" width="18.44" height="18.40" fill="#c0c060"/><rect x="152.36" y="650.00" width="18.44" height="18.40" fill="#8028e0"/><rect x="170.40" y="650.00" width="18.44" height="18.40" fill="#b88030"/><rect x="188.44" y="650.00" width="18.44" height="18.40" fill="#70ffc0"/><rect x="206.49" y="650.00" width="18.44" height="18.40" fill="#b88040"/><rect x="224.53" y="650.00" width="18.44" height="18.40" fill="#8850ff"/><rect x="242.57" y="650.00" width="18.44" height="18.40" fill="#b88060"/><rect x="260.61" y="650.00" width="18.44" height="18.40" fill="#88ffe0"/><rect x="278.65" y="650.00" width="18.44" height="18.40" fill="#b85860"/><rect x="296.69" y="650.00" width="18.44" height="18.40" fill="#88e0e0"/><rect x="314.73" y="650.00" width="18.44" height="18.40" fill="#b85840"/><rect x="332.77" y="650.00" width="18.44" height="18.40" fill="#8878ff"/><rect x="350.81" y="650.00" width="18.44" height="18.40" fill="#b85828"/><rect x="368.85" y="650.00" width="18.44" height="18.40" fill="#70e0a0"/><rect x="386.89" y="650.00" width="18.44" height="18.40" fill="#b85818"/><rect x="404.93" y="650.00" width="18.44" height="18.40" fill="#8000c0"/><rect x="422.97" y="650.00" width="18.44" height="18.40" fill="#b83818"/><rect x="441.01" y="650.00" width="18.44" height="18.40" fill="#68c0a0"/><rect x="459.06" y="650.00" width="18.44" height="18.40" fill="#b83828"/><rect x="477.10" y="650.00" width="18.44" height="18.40" fill="#70ff60"/><rect x="495.14" y="650.00" width="18.44" height="18.40" fill="#c078e0"/><rect x="513.18" y="650.00" width="18.44" height="18.40" fill="#786010"/><rect x="531.22" y="650.00" width="18.44" height="18.40" fill="#c0a0c0"/><rect x="549.26" y="650.00" width="18.04" height="18.40" fill="#80a018"/><rect x="80.20" y="668.00" width="18.44" height="18.40" fill="#b85880"/><rect x="98.24" y="668.00" width="18.44" height="18.40" fill="#80e028"/><rect x="116.28" y="668.00" width="18.44" height="18.40" fill="#c080c0"/><rect x="134.32" y="668.00" width="18.44" height="18.40" fill="#80c020"/><rect x="152.36" y="668.00" width="18.44" height="18.40" fill="#c058c0"/><rect x="170.40" y="668.00" width="18.44" height="18.40" fill="#80e030"/><rect x="188.44" y="668.00" width="18.44" height="18.40" fill="#b858a0"/><rect x="206.49" y="668.00" width="18.44" height="18.40" fill="#200080"/><rect x="224.53" y="668.00" width="18.44" height="18.40" fill="#b880a0"/><rect x="242.57" y="668.00" width="18.44" height="18.40" fill="#980028"/><rect x="260.61" y="668.00" width="18.44" height="18.40" fill="#b8a0a0"/><rect x="278.65" y="668.00" width="18.44" height="18.40" fill="#982018"/><rect x="296.69" y="668.00" width="18.44" height="18.40" fill="#b8a080"/><rect x="314.73" y="668.00" width="18.44" height="18.40" fill="#a000ff"/><rect x="332.77" y="668.00" width="18.44" height="18.40" fill="#b8a060"/><rect x="350.81" y="668.00" width="18.44" height="18.40" fill="#100040"/><rect x="368.85" y="668.00" width="18.44" height="18.40" fill="#b81830"/><rect x="386.89" y="668.00" width="18.44" height="18.40" fill="#68e060"/><rect x="404.93" y="668.00" width="18.44" height="18.40" fill="#c028e0"/><rect x="422.97" y="668.00" width="18.44" height="18.40" fill="#786028"/><rect x="441.01" y="668.00" width="18.44" height="18.40" fill="#c000ff"/><rect x="459.06" y="668.00" width="18.44" height="18.40" fill="#784040"/><rect x="477.10" y="668.00" width="18.44" height="18.40" fill="#c000ff"/><rect x="495.14" y="668.00" width="18.44" height="18.40" fill="#806040"/><rect x="513.18" y="668.00" width="18.44" height="18.40" fill="#a0ffff"/><rect x="531.22" y="668.00" width="18.44" height="18.40" fill="#781080"/><rect x="549.26" y="668.00" width="18.04" height="18.40" fill="#a8ffe0"/><rect x="80.20" y="686.00" width="18.44" height="18.40" fill="#8000a0"/><rect x="98.24" y="686.00" width="18.44" height="18.40" fill="#a0ffc0"/><rect x="116.28" y="686.00" width="18.44" height="18.40" fill="#804060"/><rect x="134.32" y="686.00" width="18.44" height="18.40" fill="#a0ffa0"/><rect x="152.36" y="686.00" width="18.44" height="18.40" fill="#804080"/><rect x="170.40" y="686.00" width="18.44" height="18.40" fill="#a0ff80"/><rect x="188.44" y="686.00" width="18.44" height="18.40" fill="#8040a0"/><rect x="206.49" y="686.00" width="18.44" height="18.40" fill="#a0ff48"/><rect x="224.53" y="686.00" width="18.44" height="18.40" fill="#8038c0"/><rect x="242.57" y="686.00" width="18.44" height="18.40" fill="#b830a0"/><rect x="260.61" y="686.00" width="18.44" height="18.40" fill="#80c030"/><rect x="278.65" y="686.00" width="18.44" height="18.40" fill="#c000e0"/><rect x="296.69" y="686.00" width="18.44" height="18.40" fill="#808028"/><rect x="314.73" y="686.00" width="18.44" height="18.40" fill="#c000e0"/><rect x="332.77" y="686.00" width="18.44" height="18.40" fill="#808040"/><rect x="350.81" y="686.00" width="18.44" height="18.40" fill="#b800c0"/><rect x="368.85" y="686.00" width="18.44" height="18.40" fill="#80a040"/><rect x="386.89" y="686.00" width="18.44" height="18.40" fill="#c000c0"/><rect x="404.93" y="686.00" width="18.44" height="18.40" fill="#80e048"/><rect x="422.97" y="686.00" width="18.44" height="18.40" fill="#b80080"/><rect x="441.01" y="686.00" width="18.44" height="18.40" fill="#8898ff"/><rect x="459.06" y="686.00" width="18.44" height="18.40" fill="#b83848"/><rect x="477.10" y="686.00" width="18.44" height="18.40" fill="#88c0c0"/><rect x="495.14" y="686.00" width="18.44" height="18.40" fill="#b81040"/><rect x="513.18" y="686.00" width="18.44" height="18.40" fill="#80a0c0"/><rect x="531.22" y="686.00" width="18.44" height="18.40" fill="#b81018"/><rect x="549.26" y="686.00" width="18.04" height="18.40" fill="#8058c0"/><rect x="80.20" y="704.00" width="18.44" height="18.40" fill="#b83880"/><rect x="98.24" y="704.00" width="18.44" height="18.40" fill="#88b8ff"/><rect x="116.28" y="704.00" width="18.44" height="18.40" fill="#b83860"/><rect x="134.32" y="704.00" width="18.44" height="18.40" fill="#88b8e0"/><rect x="152.36" y="704.00" width="18.44" height="18.40" fill="#b81060"/><rect x="170.40" y="704.00" width="18.44" height="18.40" fill="#88a0e0"/><rect x="188.44" y="704.00" width="18.44" height="18.40" fill="#b80060"/><rect x="206.49" y="704.00" width="18.44" height="18.40" fill="#8880e0"/><rect x="224.53" y="704.00" width="18.44" height="18.40" fill="#b80048"/><rect x="242.57" y="704.00" width="18.44" height="18.40" fill="#8080c0"/><rect x="260.61" y="704.00" width="18.44" height="18.40" fill="#b80030"/><rect x="278.65" y="704.00" width="18.44" height="18.40" fill="#8058e0"/><rect x="296.69" y="704.00" width="18.44" height="18.40" fill="#b80018"/><rect x="314.73" y="704.00" width="18.44" height="18.40" fill="#8080a0"/><rect x="332.77" y="704.00" width="18.44" height="18.40" fill="#a0ff30"/><rect x="350.81" y="704.00" width="18.44" height="18.40" fill="#8058a0"/><rect x="368.85" y="704.00" width="18.44" height="18.40" fill="#a0ff28"/><rect x="386.89" y="704.00" width="18.44" height="18.40" fill="#805880"/><rect x="404.93" y="704.00" width="18.44" height="18.40" fill="#b800a0"/><rect x="422.97" y="704.00" width="18.44" height="18.40" fill="#80c060"/><rect x="441.01" y="704.00" width="18.44" height="18.40" fill="#a020ff"/><rect x="459.06" y="704.00" width="18.44" height="18.40" fill="#80c080"/><rect x="477.10" y="704.00" width="18.44" height="18.40" fill="#984018"/><rect x="495.14" y="704.00" width="18.44" height="18.40" fill="#80c0a0"/><rect x="513.18" y="704.00" width="18.44" height="18.40" fill="#984028"/><rect x="531.22" y="704.00" width="18.44" height="18.40" fill="#88e0a0"/><rect x="549.26" y="704.00" width="18.04" height="18.40" fill="#986028"/><rect x="80.20" y="722.00" width="18.44" height="18.40" fill="#88e0c0"/><rect x="98.24" y="722.00" width="18.44" height="18.40" fill="#a0e028"/><rect x="116.28" y="722.00" width="18.44" height="18.40" fill="#88e0ff"/><rect x="134.32" y="722.00" width="18.44" height="18.40" fill="#a0e030"/><rect x="152.36" y="722.00" width="18.44" height="18.40" fill="#90ffff"/><rect x="170.40" y="722.00" width="18.44" height="18.40" fill="#a0c048"/><rect x="188.44" y="722.00" width="18.44" height="18.40" fill="#980048"/><rect x="206.49" y="722.00" width="18.44" height="18.40" fill="#a0e0ff"/><rect x="224.53" y="722.00" width="18.44" height="18.40" fill="#806060"/><rect x="242.57" y="722.00" width="18.44" height="18.40" fill="#a0c020"/><rect x="260.61" y="722.00" width="18.44" height="18.40" fill="#88ffc0"/><rect x="278.65" y="722.00" width="18.44" height="18.40" fill="#a08040"/><rect x="296.69" y="722.00" width="18.44" height="18.40" fill="#a000c0"/><rect x="314.73" y="722.00" width="18.44" height="18.40" fill="#a0e0e0"/><rect x="332.77" y="722.00" width="18.44" height="18.40" fill="#980060"/><rect x="350.81" y="722.00" width="18.44" height="18.40" fill="#a0e0c0"/><rect x="368.85" y="722.00" width="18.44" height="18.40" fill="#980080"/><rect x="386.89" y="722.00" width="18.44" height="18.40" fill="#a0e0a0"/><rect x="404.93" y="722.00" width="18.44" height="18.40" fill="#981828"/><rect x="422.97" y="722.00" width="18.44" height="18.40" fill="#a0e080"/><rect x="441.01" y="722.00" width="18.44" height="18.40" fill="#981840"/><rect x="459.06" y="722.00" width="18.44" height="18.40" fill="#a0e060"/><rect x="477.10" y="722.00" width="18.44" height="18.40" fill="#981860"/><rect x="495.14" y="722.00" width="18.44" height="18.40" fill="#a0b8ff"/><rect x="513.18" y="722.00" width="18.44" height="18.40" fill="#78ff48"/><rect x="531.22" y="722.00" width="18.44" height="18.40" fill="#a098ff"/><rect x="549.26" y="722.00" width="18.04" height="18.40" fill="#980080"/><rect x="80.20" y="740.00" width="18.44" height="18.40" fill="#a0a048"/><rect x="98.24" y="740.00" width="18.44" height="18.40" fill="#a000e0"/><rect x="116.28" y="740.00" width="18.44" height="18.40" fill="#a0c060"/><rect x="134.32" y="740.00" width="18.44" height="18.40" fill="#a000ff"/><rect x="152.36" y="740.00" width="18.44" height="18.40" fill="#a0c080"/><rect x="170.40" y="740.00" width="18.44" height="18.40" fill="#fffff8"/><rect x="188.44" y="740.00" width="18.44" height="18.40" fill="#a0a030"/><rect x="206.49" y="740.00" width="18.44" height="18.40" fill="#a000a0"/><rect x="224.53" y="740.00" width="18.44" height="18.40" fill="#88ffa0"/><rect x="242.57" y="740.00" width="18.44" height="18.40" fill="#984040"/><rect x="260.61" y="740.00" width="18.44" height="18.40" fill="#a0b8e0"/><rect x="278.65" y="740.00" width="18.44" height="18.40" fill="#983860"/><rect x="296.69" y="740.00" width="18.44" height="18.40" fill="#88ff60"/><rect x="314.73" y="740.00" width="18.44" height="18.40" fill="#983880"/><rect x="332.77" y="740.00" width="18.44" height="18.40" fill="#fffff0"/><rect x="350.81" y="740.00" width="18.44" height="18.40" fill="#808060"/><rect x="368.85" y="740.00" width="18.44" height="18.40" fill="#f8ffe8"/><rect x="386.89" y="740.00" width="18.44" height="18.40" fill="#80a060"/><rect x="404.93" y="740.00" width="18.44" height="18.40" fill="#a08080"/><rect x="422.97" y="740.00" width="18.44" height="18.40" fill="#f88048"/><rect x="441.01" y="740.00" width="18.44" height="18.40" fill="#a08060"/><rect x="459.06" y="740.00" width="18.44" height="18.40" fill="#202018"/><rect x="477.10" y="740.00" width="18.44" height="18.40" fill="#a0c0c0"/><rect x="495.14" y="740.00" width="18.44" height="18.40" fill="#985818"/><rect x="513.18" y="740.00" width="18.44" height="18.40" fill="#a098e0"/><rect x="531.22" y="740.00" width="18.44" height="18.40" fill="#988018"/><rect x="549.26" y="740.00" width="18.04" height="18.40" fill="#a0a0c0"/><rect x="80.20" y="758.00" width="18.44" height="18.40" fill="#201020"/><rect x="98.24" y="758.00" width="18.44" height="18.40" fill="#a0c0a0"/><rect x="116.28" y="758.00" width="18.44" height="18.40" fill="#182020"/><rect x="134.32" y="758.00" width="18.44" height="18.40" fill="#a0a0a0"/><rect x="152.36" y="758.00" width="18.44" height="18.40" fill="#181820"/><rect x="170.40" y="758.00" width="18.44" height="18.40" fill="#a0a080"/><rect x="188.44" y="758.00" width="18.44" height="18.40" fill="#fff8ff"/><rect x="206.49" y="758.00" width="18.44" height="18.40" fill="#a08030"/><rect x="224.53" y="758.00" width="18.44" height="18.40" fill="#202020"/><rect x="242.57" y="758.00" width="18.44" height="18.40" fill="#985880"/><rect x="260.61" y="758.00" width="18.44" height="18.40" fill="#406010"/><rect x="278.65" y="758.00" width="18.44" height="18.40" fill="#985860"/><rect x="296.69" y="758.00" width="18.44" height="18.40" fill="#f8e8f8"/><rect x="314.73" y="758.00" width="18.44" height="18.40" fill="#985840"/><rect x="332.77" y="758.00" width="18.44" height="18.40" fill="#a078ff"/><rect x="350.81" y="758.00" width="18.44" height="18.40" fill="#f8e8f8"/><rect x="368.85" y="758.00" width="18.44" height="18.40" fill="#80a080"/><rect x="386.89" y="758.00" width="18.44" height="18.40" fill="#f8ffff"/><rect x="404.93" y="758.00" width="18.44" height="18.40" fill="#80e080"/><rect x="422.97" y="758.00" width="18.44" height="18.40" fill="#f8ffff"/><rect x="441.01" y="758.00" width="18.44" height="18.40" fill="#9838a0"/><rect x="459.06" y="758.00" width="18.44" height="18.40" fill="#e8f8f8"/><rect x="477.10" y="758.00" width="18.44" height="18.40" fill="#9830c0"/><rect x="495.14" y="758.00" width="18.44" height="18.40" fill="#e8f8f8"/><rect x="513.18" y="758.00" width="18.44" height="18.40" fill="#909080"/><rect x="531.22" y="758.00" width="18.44" height="18.40" fill="#fcf8ff"/><rect x="549.26" y="758.00" width="18.04" height="18.40" fill="#280008"/><rect x="80.20" y="776.00" width="18.44" height="18.40" fill="#908090"/><rect x="98.24" y="776.00" width="18.44" height="18.40" fill="#f80030"/><rect x="116.28" y="776.00" width="18.44" height="18.40" fill="#807080"/><rect x="134.32" y="776.00" width="18.44" height="18.40" fill="#f0f0ff"/><rect x="152.36" y="776.00" width="18.44" height="18.40" fill="#809090"/><rect x="170.40" y="776.00" width="18.44" height="18.40" fill="#e8e8f8"/><rect x="188.44" y="776.00" width="18.44" height="18.40" fill="#708080"/><rect x="206.49" y="776.00" width="18.44" height="18.40" fill="#f8fff8"/><rect x="224.53" y="776.00" width="18.44" height="18.40" fill="#808090"/><rect x="242.57" y="776.00" width="18.44" height="18.40" fill="#f0fff0"/><rect x="260.61" y="776.00" width="18.44" height="18.40" fill="#707080"/><rect x="278.65" y="776.00" width="18.44" height="18.40" fill="#e8ffe8"/><rect x="296.69" y="776.00" width="18.44" height="18.40" fill="#809080"/><rect x="314.73" y="776.00" width="18.44" height="18.40" fill="#e8f8e8"/><rect x="332.77" y="776.00" width="18.44" height="18.40" fill="#708070"/><rect x="350.81" y="776.00" width="18.44" height="18.40" fill="#fff8f8"/><rect x="368.85" y="776.00" width="18.44" height="18.40" fill="#182018"/><rect x="386.89" y="776.00" width="18.44" height="18.40" fill="#80a0a0"/><rect x="404.93" y="776.00" width="18.44" height="18.40" fill="#908080"/><rect x="422.97" y="776.00" width="18.44" height="18.40" fill="#402008"/><rect x="441.01" y="776.00" width="18.44" height="18.40" fill="#807070"/><rect x="459.06" y="776.00" width="18.44" height="18.40" fill="#f8e8e8"/><rect x="477.10" y="776.00" width="18.44" height="18.40" fill="#281818"/><rect x="495.14" y="776.00" width="18.44" height="18.40" fill="#a058a0"/><rect x="513.18" y="776.00" width="18.44" height="18.40" fill="#f8e8e8"/><rect x="531.22" y="776.00" width="18.44" height="18.40" fill="#000018"/><rect x="549.26" y="776.00" width="18.04" height="18.40" fill="#a0a060"/><rect x="80.20" y="794.00" width="18.44" height="18.00" fill="#001800"/><rect x="98.24" y="794.00" width="18.44" height="18.00" fill="#a078e0"/><rect x="116.28" y="794.00" width="18.44" height="18.00" fill="#200000"/><rect x="134.32" y="794.00" width="18.44" height="18.00" fill="#a078c0"/><rect x="152.36" y="794.00" width="18.44" height="18.00" fill="#000010"/><rect x="170.40" y="794.00" width="18.44" height="18.00" fill="#a078a0"/><rect x="188.44" y="794.00" width="18.44" height="18.00" fill="#001000"/><rect x="206.49" y="794.00" width="18.44" height="18.00" fill="#a058c0"/><rect x="224.53" y="794.00" width="18.44" height="18.00" fill="#180000"/><rect x="242.57" y="794.00" width="18.44" height="18.00" fill="#002000"/><rect x="260.61" y="794.00" width="18.44" height="18.00" fill="#f8c080"/><rect x="278.65" y="794.00" width="18.44" height="18.00" fill="#808080"/><rect x="296.69" y="794.00" width="18.44" height="18.00" fill="#f0f0f0"/><rect x="314.73" y="794.00" width="18.44" height="18.00" fill="#707070"/><rect x="332.77" y="794.00" width="18.44" height="18.00" fill="#eeeeee"/><rect x="350.81" y="794.00" width="18.44" height="18.00" fill="#222222"/><rect x="368.85" y="794.00" width="18.44" height="18.00" fill="#e8e8e8"/><rect x="386.89" y="794.00" width="18.44" height="18.00" fill="#181818"/><rect x="404.93" y="794.00" width="18.44" height="18.00" fill="#ffffff"/><rect x="422.97" y="794.00" width="18.44" height="18.00" fill="#808080"/><rect x="441.01" y="794.00" width="18.44" height="18.00" fill="#202008"/><rect x="459.06" y="794.00" width="18.44" height="18.00" fill="#a050e0"/><rect x="477.10" y="794.00" width="18.44" height="18.00" fill="#e05820"/><rect x="495.14" y="794.00" width="18.44" height="18.00" fill="#606080"/><rect x="513.18" y="794.00" width="18.44" height="18.00" fill="#e03820"/><rect x="531.22" y="794.00" width="18.44" height="18.00" fill="#909090"/><rect x="549.26" y="794.00" width="18.04" height="18.00" fill="#080028"/><path d="M50.1 208.6 L57.7 203.9 L65.3 208.6 L57.7 213.3 Z" fill="#000"/><path d="M581.9 208.6 L589.5 203.9 L597.1 208.6 L589.5 213.3 Z" fill="#000"/><path d="M50.1 226.6 L57.7 221.9 L65.3 226.6 L57.7 231.3 Z" fill="#000"/><path d="M581.9 226.6 L589.5 221.9 L597.1 226.6 L589.5 231.3 Z" fill="#000"/><path d="M50.1 244.6 L57.7 239.9 L65.3 244.6 L57.7 249.3 Z" fill="#000"/><path d="M581.9 244.6 L589.5 239.9 L597.1 244.6 L589.5 249.3 Z" fill="#000"/><path d="M50.1 262.6 L57.7 257.9 L65.3 262.6 L57.7 267.3 Z" fill="#000"/><path d="M581.9 262.6 L589.5 257.9 L597.1 262.6 L589.5 267.3 Z" fill="#000"/><path d="M50.1 280.6 L57.7 275.9 L65.3 280.6 L57.7 285.3 Z" fill="#000"/><path d="M581.9 280.6 L589.5 275.9 L597.1 280.6 L589.5 285.3 Z" fill="#000"/><path d="M50.1 298.6 L57.7 293.9 L65.3 298.6 L57.7 303.3 Z" fill="#000"/><path d="M581.9 298.6 L589.5 293.9 L597.1 298.6 L589.5 303.3 Z" fill="#000"/><path d="M50.1 316.6 L57.7 311.9 L65.3 316.6 L57.7 321.3 Z" fill="#000"/><path d="M581.9 316.6 L589.5 311.9 L597.1 316.6 L589.5 321.3 Z" fill="#000"/><path d="M50.1 334.6 L57.7 329.9 L65.3 334.6 L57.7 339.3 Z" fill="#000"/><path d="M581.9 334.6 L589.5 329.9 L597.1 334.6 L589.5 339.3 Z" fill="#000"/><path d="M50.1 352.6 L57.7 347.9 L65.3 352.6 L57.7 357.3 Z" fill="#000"/><path d="M581.9 352.6 L589.5 347.9 L597.1 352.6 L589.5 357.3 Z" fill="#000"/><path d="M50.1 370.6 L57.7 365.9 L65.3 370.6 L57.7 375.3 Z" fill="#000"/><path d="M581.9 370.6 L589.5 365.9 L597.1 370.6 L589.5 375.3 Z" fill="#000"/><path d="M50.1 388.6 L57.7 383.9 L65.3 388.6 L57.7 393.3 Z" fill="#000"/><path d="M581.9 388.6 L589.5 383.9 L597.1 388.6 L589.5 393.3 Z" fill="#000"/><path d="M50.1 406.6 L57.7 401.9 L65.3 406.6 L57.7 411.3 Z" fill="#000"/><path d="M581.9 406.6 L589.5 401.9 L597.1 406.6 L589.5 411.3 Z" fill="#000"/><path d="M50.1 424.6 L57.7 419.9 L65.3 424.6 L57.7 429.3 Z" fill="#000"/><path d="M581.9 424.6 L589.5 419.9 L597.1 424.6 L589.5 429.3 Z" fill="#000"/><path d="M50.1 442.6 L57.7 437.9 L65.3 442.6 L57.7 447.3 Z" fill="#000"/><path d="M581.9 442.6 L589.5 437.9 L597.1 442.6 L589.5 447.3 Z" fill="#000"/><path d="M50.1 460.6 L57.7 455.9 L65.3 460.6 L57.7 465.3 Z" fill="#000"/><path d="M581.9 460.6 L589.5 455.9 L597.1 460.6 L589.5 465.3 Z" fill="#000"/><path d="M50.1 478.6 L57.7 473.9 L65.3 478.6 L57.7 483.3 Z" fill="#000"/><path d="M581.9 478.6 L589.5 473.9 L597.1 478.6 L589.5 483.3 Z" fill="#000"/><path d="M50.1 496.6 L57.7 491.9 L65.3 496.6 L57.7 501.3 Z" fill="#000"/><path d="M581.9 496.6 L589.5 491.9 L597.1 496.6 L589.5 501.3 Z" fill="#000"/><path d="M50.1 514.6 L57.7 509.9 L65.3 514.6 L57.7 519.3 Z" fill="#000"/><path d="M581.9 514.6 L589.5 509.9 L597.1 514.6 L589.5 519.3 Z" fill="#000"/><path d="M50.1 532.6 L57.7 527.9 L65.3 532.6 L57.7 537.3 Z" fill="#000"/><path d="M581.9 532.6 L589.5 527.9 L597.1 532.6 L589.5 537.3 Z" fill="#000"/><path d="M50.1 550.6 L57.7 545.9 L65.3 550.6 L57.7 555.3 Z" fill="#000"/><path d="M581.9 550.6 L589.5 545.9 L597.1 550.6 L589.5 555.3 Z" fill="#000"/><path d="M50.1 568.6 L57.7 563.9 L65.3 568.6 L57.7 573.3 Z" fill="#000"/><path d="M581.9 568.6 L589.5 563.9 L597.1 568.6 L589.5 573.3 Z" fill="#000"/><path d="M50.1 586.6 L57.7 581.9 L65.3 586.6 L57.7 591.3 Z" fill="#000"/><path d="M581.9 586.6 L589.5 581.9 L597.1 586.6 L589.5 591.3 Z" fill="#000"/><path d="M50.1 604.6 L57.7 599.9 L65.3 604.6 L57.7 609.3 Z" fill="#000"/><path d="M581.9 604.6 L589.5 599.9 L597.1 604.6 L589.5 609.3 Z" fill="#000"/><path d="M50.1 622.6 L57.7 617.9 L65.3 622.6 L57.7 627.3 Z" fill="#000"/><path d="M581.9 622.6 L589.5 617.9 L597.1 622.6 L589.5 627.3 Z" fill="#000"/><path d="M50.1 640.6 L57.7 635.9 L65.3 640.6 L57.7 645.3 Z" fill="#000"/><path d="M581.9 640.6 L589.5 635.9 L597.1 640.6 L589.5 645.3 Z" fill="#000"/><path d="M50.1 658.6 L57.7 653.9 L65.3 658.6 L57.7 663.3 Z" fill="#000"/><path d="M581.9 658.6 L589.5 653.9 L597.1 658.6 L589.5 663.3 Z" fill="#000"/><path d="M50.1 676.6 L57.7 671.9 L65.3 676.6 L57.7 681.3 Z" fill="#000"/><path d="M581.9 676.6 L589.5 671.9 L597.1 676.6 L589.5 681.3 Z" fill="#000"/><path d="M50.1 694.6 L57.7 689.9 L65.3 694.6 L57.7 699.3 Z" fill="#000"/><path d="M581.9 694.6 L589.5 689.9 L597.1 694.6 L589.5 699.3 Z" fill="#000"/><path d="M50.1 712.6 L57.7 707.9 L65.3 712.6 L57.7 717.3 Z" fill="#000"/><path d="M581.9 712.6 L589.5 707.9 L597.1 712.6 L589.5 717.3 Z" fill="#000"/><path d="M50.1 730.6 L57.7 725.9 L65.3 730.6 L57.7 735.3 Z" fill="#000"/><path d="M581.9 730.6 L589.5 725.9 L597.1 730.6 L589.5 735.3 Z" fill="#000"/><path d="M50.1 748.6 L57.7 743.9 L65.3 748.6 L57.7 753.3 Z" fill="#000"/><path d="M581.9 748.6 L589.5 743.9 L597.1 748.6 L589.5 753.3 Z" fill="#000"/><path d="M50.1 766.6 L57.7 761.9 L65.3 766.6 L57.7 771.3 Z" fill="#000"/><path d="M581.9 766.6 L589.5 761.9 L597.1 766.6 L589.5 771.3 Z" fill="#000"/><path d="M50.1 784.6 L57.7 779.9 L65.3 784.6 L57.7 789.3 Z" fill="#000"/><path d="M581.9 784.6 L589.5 779.9 L597.1 784.6 L589.5 789.3 Z" fill="#000"/><path d="M50.1 802.6 L57.7 797.9 L65.3 802.6 L57.7 807.3 Z" fill="#000"/><path d="M581.9 802.6 L589.5 797.9 L597.1 802.6 L589.5 807.3 Z" fill="#000"/></svg>
<div class="t" style="left:56.10px;top:878.20px;font-size:6.35px;line-height:8px;font-weight:bold;color:#111;">Seite:</div>
<div class="t" style="left:116.40px;top:878.20px;font-size:6.35px;line-height:8px;color:#333;">1/1</div>
<div class="t" style="left:56.10px;top:885.68px;font-size:6.35px;line-height:8px;font-weight:bold;color:#111;">Farbraum:</div>
<div class="t" style="left:116.40px;top:885.68px;font-size:6.35px;line-height:8px;color:#333;">RGB</div>
<div class="t" style="left:56.10px;top:893.16px;font-size:6.35px;line-height:8px;font-weight:bold;color:#111;">Erstellt:</div>
<div class="t" style="left:116.40px;top:893.16px;font-size:6.35px;line-height:8px;color:#333;">06.03.2018 10:35:23</div>
<div class="t" style="left:56.10px;top:900.64px;font-size:6.35px;line-height:8px;font-weight:bold;color:#111;">Instrument:</div>
<div class="t" style="left:116.40px;top:900.64px;font-size:6.35px;line-height:8px;color:#333;">X-Rite i1iSis</div>
<div class="t" style="left:56.10px;top:908.12px;font-size:6.35px;line-height:8px;font-weight:bold;color:#111;">Instrumentfilter:</div>
<div class="t" style="left:116.40px;top:908.12px;font-size:6.35px;line-height:8px;color:#333;">M0 - Einschließlich UV</div>
<div class="t" style="left:56.10px;top:915.60px;font-size:6.35px;line-height:8px;font-weight:bold;color:#111;">Messfeldlayout:</div>
<div class="t" style="left:116.40px;top:915.60px;font-size:6.35px;line-height:8px;color:#333;">918</div>
<div class="t" style="left:211.70px;top:878.20px;font-size:6.35px;line-height:8px;font-weight:bold;color:#111;">Sitzungsname:</div>
<div class="t" style="left:328.20px;top:878.20px;font-size:6.35px;line-height:8px;color:#333;">pro4000 fiery rgb</div>
<div class="t" style="left:211.70px;top:885.68px;font-size:6.35px;line-height:8px;font-weight:bold;color:#111;">Erzwungener Kalibrierungsstatus:</div>
<div class="t" style="left:328.20px;top:885.68px;font-size:6.35px;line-height:8px;color:#333;">Kalibriert</div>
<div class="t" style="left:211.70px;top:893.16px;font-size:6.35px;line-height:8px;font-weight:bold;color:#111;">Limit:</div>
<div class="t" style="left:328.20px;top:893.16px;font-size:6.35px;line-height:8px;color:#333;">400/300/200</div>
<div class="t" style="left:211.70px;top:900.64px;font-size:6.35px;line-height:8px;font-weight:bold;color:#111;">Typ:</div>
<div class="t" style="left:328.20px;top:900.64px;font-size:6.35px;line-height:8px;color:#333;">Bitmap-Bilder</div>
<svg class="a" style="left:593px;top:909px" width="40" height="28" viewBox="0 0 1118 783"><g fill="#1b1b1b"><path fill-rule="evenodd" d="M500 432 C518 380 520 325 482 264 C450 225 380 214 318 232 C228 256 150 320 106 420 C76 500 90 572 150 606 C210 640 300 632 372 600 C412 582 447 555 468 518 L440 508 C400 540 340 556 280 546 C235 536 212 500 216 442 Z M262 406 C285 345 340 300 395 300 C432 302 442 330 426 366 C420 380 410 392 400 399 Z"/><path d="M448 692 L585 688 L657 442 L832 352 L834 338 L700 352 C716 290 770 216 836 182 L864 118 C800 98 720 124 655 190 C608 250 585 330 560 400 Z"/><path d="M768 607 L912 607 L990 346 L874 340 L846 366 L856 374 Z"/><path d="M893 272 C898 225 950 188 1002 199 C1042 210 1032 262 1000 293 C970 307 918 306 893 272 Z"/></g><path d="M992 350 H1080" stroke="#888" stroke-width="8"/></svg>
<div class="a" style="left:682px;top:151px;width:409px;height:1px;background:#fbfbfb;"></div>
<div class="a" style="left:682px;top:40px;width:409px;height:111px;border:2px solid #a6a6a6;border-bottom-width:1px;border-top-color:#acacac;box-sizing:border-box;"></div>
<div class="a" style="left:682px;top:40px;width:409px;height:1px;background:#bdbdbd;"></div>
<div class="a" style="left:682px;top:40px;width:1px;height:111px;background:#b8b8b8;"></div>
<div class="a" style="left:1090px;top:40px;width:1px;height:111px;background:#b8b8b8;"></div>
<div class="t" style="left:705.70px;top:42.20px;font-size:13px;line-height:17px;letter-spacing:-0.029px;font-weight:bold;">Printer</div>
<div class="t" style="left:751.30px;top:42.20px;font-size:13px;line-height:17px;letter-spacing:-0.282px;font-weight:bold;">Setup</div>
<div class="t" style="left:734.20px;top:64.00px;font-size:13px;line-height:17px;letter-spacing:-0.313px;">Printer:</div>
<div class="a" style="left:782px;top:62px;width:250px;height:22px;background:#fff;border:1px solid #7a7a7a;box-sizing:border-box;"></div>
<svg class="a" style="left:1017.6px;top:71.0px" width="10" height="6" viewBox="0 0 10 6"><path d="M1 0.8 L5 4.8 L9 0.8" fill="none" stroke="#444" stroke-width="1.1"/></svg>
<div class="t" style="left:789.20px;top:65.20px;font-size:13px;line-height:17px;letter-spacing:-0.713px;">Canon_PIXMA_Pro100</div>
<div class="t" style="left:915.40px;top:65.20px;font-size:13px;line-height:17px;letter-spacing:-0.429px;">(PrintFab)</div>
<div class="t" style="left:735.60px;top:93.00px;font-size:13px;line-height:17px;letter-spacing:-0.868px;">Copies:</div>
<div class="a" style="left:782px;top:92px;width:42px;height:20px;background:#fff;border:1px solid #7a7a7a;box-sizing:border-box;"></div>
<div class="t" style="left:788.40px;top:94.20px;font-size:13px;line-height:17px;">1</div>
<div class="a" style="left:833px;top:93px;width:107px;height:18px;background:#e1e1e1;border:1px solid #adadad;box-sizing:border-box;"></div>
<div class="t" style="left:843.60px;top:94.20px;font-size:13px;line-height:17px;letter-spacing:-0.209px;">Print Settings...</div>
<div class="t" style="left:733.20px;top:122.20px;font-size:13px;line-height:17px;letter-spacing:-0.335px;">Layout:</div>
<div class="a" style="left:782px;top:120px;width:22px;height:22px;background:#bbd8f0;border:1px solid #90c6f4;box-sizing:border-box;"></div>
<svg class="a" style="left:786px;top:123px" width="14" height="16" viewBox="0 0 14 16"><path d="M0.6 0.6 H10 L13.4 4 V15.4 H0.6 Z" fill="#f4f7fb" stroke="#1e1e1e" stroke-width="1.2"/><path d="M10 0.6 V4 H13.4" fill="#fff" stroke="#1e1e1e" stroke-width="1"/><circle cx="6.8" cy="5.2" r="1.7" fill="#fff" stroke="#2a2a2a" stroke-width="0.9"/><path d="M3.1999999999999997 11.8 V9.0 Q3.1999999999999997 7.800000000000001 4.4 7.800000000000001 H9.2 Q10.4 7.800000000000001 10.4 9.0 V11.8 H9.0 V15 H4.6 V11.8 Z" fill="#8a8a8a" stroke="#2a2a2a" stroke-width="0.8"/><path d="M6.8 9.0 V15" stroke="#9c9c9c" stroke-width="0.8"/></svg>
<svg class="a" style="left:807px;top:124px" width="16" height="14" viewBox="0 0 16 14"><path d="M0.6 0.6 H12 L15.4 4 V13.4 H0.6 Z" fill="#f6f6f6" stroke="#1e1e1e" stroke-width="1.2"/><path d="M12 0.6 V4 H15.4" fill="#fff" stroke="#1e1e1e" stroke-width="1"/><circle cx="7.8" cy="4.2" r="1.7" fill="#fff" stroke="#2a2a2a" stroke-width="0.9"/><path d="M4.199999999999999 10.8 V8.0 Q4.199999999999999 6.800000000000001 5.4 6.800000000000001 H10.2 Q11.4 6.800000000000001 11.4 8.0 V10.8 H10.0 V13 H5.6 V10.8 Z" fill="#8a8a8a" stroke="#2a2a2a" stroke-width="0.8"/><path d="M7.8 8.0 V13" stroke="#9c9c9c" stroke-width="0.8"/></svg>
<div class="a" style="left:682px;top:1037px;width:409px;height:1px;background:#fbfbfb;"></div>
<div class="a" style="left:682px;top:160px;width:409px;height:877px;border-left:2px solid #a4a4a4;border-right:1px solid #acacac;border-bottom:1px solid #a0a0a0;box-sizing:border-box;"></div>
<div class="a" style="left:682px;top:160px;width:1px;height:877px;background:#b8b8b8;"></div>
<div class="a" style="left:682px;top:160px;width:409px;height:3px;background:linear-gradient(#c2c2c2,#929292);"></div>
<div class="a" style="left:1074px;top:162px;width:16px;height:874px;background:#eeeeee;"></div>
<div class="a" style="left:1074px;top:162px;width:1px;height:874px;background:#fcfcfc;"></div>
<div class="a" style="left:1075px;top:179px;width:14px;height:832px;background:#cdcdcd;"></div>
<svg class="a" style="left:1076.5px;top:167px" width="10" height="8" viewBox="0 0 10 8"><path d="M1.6 6.4 L5 3 L8.4 6.4" fill="none" stroke="#505050" stroke-width="2.1"/></svg>
<svg class="a" style="left:1076.5px;top:1023.6px" width="10" height="8" viewBox="0 0 10 8"><path d="M1.6 1.6 L5 5 L8.4 1.6" fill="none" stroke="#505050" stroke-width="2.1"/></svg>
<svg class="a" style="left:690px;top:170px" width="10" height="10" viewBox="0 0 10 10"><path d="M0.2 0.4 H9 L4.6 9 Z" fill="#5c5c5c"/><path d="M0.2 0.6 H9" stroke="#222" stroke-width="1"/></svg>
<div class="t" style="left:708.30px;top:165.70px;font-size:13px;line-height:17px;letter-spacing:-0.468px;font-weight:bold;">Color</div>
<div class="t" style="left:743.80px;top:165.70px;font-size:13px;line-height:17px;letter-spacing:-0.096px;font-weight:bold;">Management</div>
<svg class="a" style="left:695px;top:186px" width="30" height="30" viewBox="0 0 30 30"><defs><linearGradient id="wg" x1="0" y1="0" x2="0" y2="1"><stop offset="0" stop-color="#ffd61e"/><stop offset="1" stop-color="#e4b61c"/></linearGradient></defs><ellipse cx="14.5" cy="27.6" rx="13" ry="1.3" fill="#000" opacity="0.13"/><path d="M13.2 3.2 Q14.5 1.2 15.8 3.2 L27.3 24.3 Q28.2 26.6 25.8 26.6 H3.2 Q0.8 26.6 1.7 24.3 Z" fill="url(#wg)" stroke="#5e3f08" stroke-width="1.1" stroke-linejoin="round"/><rect x="13.1" y="8" width="2.8" height="9.8" rx="1.3" fill="#4b4f58"/><circle cx="14.5" cy="21.8" r="1.7" fill="#4b4f58"/></svg>
<div class="t" style="left:734.70px;top:183.80px;font-size:13px;line-height:17px;letter-spacing:-0.762px;">Remember</div>
<div class="t" style="left:796.80px;top:183.80px;font-size:13px;line-height:17px;letter-spacing:0.679px;">to</div>
<div class="t" style="left:812.90px;top:183.80px;font-size:13px;line-height:17px;letter-spacing:-0.628px;">disable</div>
<div class="t" style="left:853.60px;top:183.80px;font-size:13px;line-height:17px;letter-spacing:-0.124px;">the</div>
<div class="t" style="left:875.20px;top:183.80px;font-size:13px;line-height:17px;letter-spacing:-0.076px;">printer’s</div>
<div class="t" style="left:924.90px;top:183.80px;font-size:13px;line-height:17px;letter-spacing:-0.695px;">color</div>
<div class="t" style="left:734.70px;top:198.00px;font-size:13px;line-height:17px;letter-spacing:-0.418px;">management</div>
<div class="t" style="left:810.30px;top:198.00px;font-size:13px;line-height:17px;letter-spacing:-0.509px;">in</div>
<div class="t" style="left:823.30px;top:198.00px;font-size:13px;line-height:17px;letter-spacing:0.209px;">the</div>
<div class="t" style="left:845.90px;top:198.00px;font-size:13px;line-height:17px;letter-spacing:-0.018px;">print</div>
<div class="t" style="left:875.00px;top:198.00px;font-size:13px;line-height:17px;letter-spacing:-0.138px;">settings</div>
<div class="t" style="left:922.60px;top:198.00px;font-size:13px;line-height:17px;letter-spacing:-0.566px;">dialog</div>
<div class="t" style="left:957.80px;top:198.00px;font-size:13px;line-height:17px;letter-spacing:-0.468px;">box.</div>
<div class="t" style="left:694.20px;top:222.70px;font-size:13px;line-height:17px;letter-spacing:-0.269px;">Document</div>
<div class="t" style="left:755.20px;top:222.70px;font-size:13px;line-height:17px;letter-spacing:-0.420px;">Profile:</div>
<div class="t" style="left:796.20px;top:222.70px;font-size:13px;line-height:17px;letter-spacing:-1.643px;">sRGB</div>
<div class="t" style="left:828.20px;top:222.70px;font-size:13px;line-height:17px;letter-spacing:-0.644px;">IEC61966-2.1</div>
<div class="t" style="left:695.40px;top:250.40px;font-size:13px;line-height:17px;letter-spacing:-0.813px;">Color</div>
<div class="t" style="left:726.30px;top:250.40px;font-size:13px;line-height:17px;letter-spacing:-0.636px;">Handling:</div>
<div class="a" style="left:784px;top:248px;width:280px;height:22px;background:#fff;border:1px solid #7a7a7a;box-sizing:border-box;"></div>
<svg class="a" style="left:1049.6px;top:257.0px" width="10" height="6" viewBox="0 0 10 6"><path d="M1 0.8 L5 4.8 L9 0.8" fill="none" stroke="#444" stroke-width="1.1"/></svg>
<div class="t" style="left:790.80px;top:251.00px;font-size:13px;line-height:17px;letter-spacing:-0.296px;">Photoshop</div>
<div class="t" style="left:854.20px;top:251.00px;font-size:13px;line-height:17px;letter-spacing:-0.840px;">Manages</div>
<div class="t" style="left:905.70px;top:251.00px;font-size:13px;line-height:17px;letter-spacing:-1.028px;">Colors</div>
<div class="t" style="left:699.30px;top:280.20px;font-size:13px;line-height:17px;letter-spacing:-0.341px;">Printer</div>
<div class="t" style="left:739.10px;top:280.20px;font-size:13px;line-height:17px;letter-spacing:-0.508px;">Profile:</div>
<div class="a" style="left:784px;top:278px;width:280px;height:22px;background:#fff;border:1px solid #7a7a7a;box-sizing:border-box;"></div>
<svg class="a" style="left:1049.6px;top:287.0px" width="10" height="6" viewBox="0 0 10 6"><path d="M1 0.8 L5 4.8 L9 0.8" fill="none" stroke="#444" stroke-width="1.1"/></svg>
<div class="t" style="left:790.80px;top:281.00px;font-size:13px;line-height:17px;letter-spacing:-1.668px;">sRGB</div>
<div class="t" style="left:822.70px;top:281.00px;font-size:13px;line-height:17px;letter-spacing:-0.602px;">IEC61966-2.1</div>
<div class="a" style="left:696px;top:317px;width:366px;height:204px;border:1px solid #fff;box-sizing:border-box;"></div>
<div class="a" style="left:695px;top:316px;width:366px;height:204px;border:1px solid #a9a9a9;box-sizing:border-box;"></div>
<div class="a" style="left:708px;top:314px;width:131px;height:6px;background:#eeeeee;"></div>
<div class="a" style="left:714px;top:308px;width:119px;height:24px;background:#fff;border:1px solid #7a7a7a;box-sizing:border-box;"></div>
<svg class="a" style="left:818.6px;top:318.0px" width="10" height="6" viewBox="0 0 10 6"><path d="M1 0.8 L5 4.8 L9 0.8" fill="none" stroke="#444" stroke-width="1.1"/></svg>
<div class="t" style="left:721.40px;top:312.10px;font-size:13px;line-height:17px;letter-spacing:-0.816px;">Normal</div>
<div class="t" style="left:762.30px;top:312.10px;font-size:13px;line-height:17px;letter-spacing:-0.460px;">Printing</div>
<div class="t" style="left:704.30px;top:341.60px;font-size:13px;line-height:17px;letter-spacing:-0.543px;">Rendering</div>
<div class="t" style="left:763.30px;top:341.60px;font-size:13px;line-height:17px;letter-spacing:0.295px;">Intent:</div>
<div class="a" style="left:811px;top:341px;width:150px;height:21px;background:#fff;border:1px solid #7a7a7a;box-sizing:border-box;"></div>
<div class="t" style="left:818.20px;top:342.40px;font-size:13px;line-height:17px;letter-spacing:-0.385px;">Perceptual</div>
<svg class="a" style="left:946.6px;top:349.5px" width="10" height="6" viewBox="0 0 10 6"><path d="M1 0.8 L5 4.8 L9 0.8" fill="none" stroke="#444" stroke-width="1.1"/></svg>
<div class="a" style="left:704px;top:370px;width:13px;height:13px;background:#fff;border:1px solid #333;box-sizing:border-box;"></div>
<svg class="a" style="left:704px;top:370px" width="13" height="13" viewBox="0 0 13 13"><path d="M2.6 6.4 L5.3 9.2 L10.6 3.4" fill="none" stroke="#2a2a2a" stroke-width="1.45"/></svg>
<div class="t" style="left:720.40px;top:367.80px;font-size:13px;line-height:17px;letter-spacing:-0.918px;">Black</div>
<div class="t" style="left:751.50px;top:367.80px;font-size:13px;line-height:17px;letter-spacing:-0.326px;">Point</div>
<div class="t" style="left:783.40px;top:367.80px;font-size:13px;line-height:17px;letter-spacing:-0.677px;">Compensation</div>
<div class="a" style="left:684px;top:573px;width:390px;height:1px;background:#a3a3a3;"></div>
<svg class="a" style="left:690px;top:581.5px" width="10" height="10" viewBox="0 0 10 10"><path d="M0.2 0.4 H9 L4.6 9 Z" fill="#5c5c5c"/><path d="M0.2 0.6 H9" stroke="#222" stroke-width="1"/></svg>
<div class="t" style="left:707.60px;top:576.80px;font-size:13px;line-height:17px;letter-spacing:-0.310px;font-weight:bold;">Position</div>
<div class="t" style="left:760.30px;top:576.80px;font-size:13px;line-height:17px;letter-spacing:-0.204px;font-weight:bold;">and</div>
<div class="t" style="left:786.70px;top:576.80px;font-size:13px;line-height:17px;letter-spacing:-0.103px;font-weight:bold;">Size</div>
<div class="a" style="left:695px;top:604px;width:370px;height:43px;border:1px solid #fff;box-sizing:border-box;"></div>
<div class="a" style="left:694px;top:603px;width:370px;height:43px;border:1px solid #a9a9a9;box-sizing:border-box;"></div>
<div class="a" style="left:710px;top:601px;width:55px;height:6px;background:#eeeeee;"></div>
<div class="t" style="left:716.10px;top:593.80px;font-size:13px;line-height:17px;letter-spacing:-0.381px;">Position</div>
<div class="a" style="left:704px;top:620px;width:13px;height:13px;background:#fff;border:1px solid #333;box-sizing:border-box;"></div>
<svg class="a" style="left:704px;top:620px" width="13" height="13" viewBox="0 0 13 13"><path d="M2.6 6.4 L5.3 9.2 L10.6 3.4" fill="none" stroke="#2a2a2a" stroke-width="1.45"/></svg>
<div class="t" style="left:720.50px;top:618.10px;font-size:13px;line-height:17px;letter-spacing:-0.487px;">Center</div>
<div class="t" style="left:772.50px;top:618.10px;font-size:13px;line-height:17px;letter-spacing:0.007px;">Top:</div>
<div class="a" style="left:801px;top:618px;width:70px;height:19px;background:#efefef;border:1px solid #c8c8c8;box-sizing:border-box;box-shadow:inset 0 0 0 1px #f9f9f9;"></div>
<div class="t" style="left:807.40px;top:618.40px;font-size:13px;line-height:17px;color:#6d6d6d;">-0,07</div>
<div class="t" style="left:880.50px;top:618.10px;font-size:13px;line-height:17px;letter-spacing:-0.059px;">Left:</div>
<div class="a" style="left:910px;top:618px;width:70px;height:19px;background:#efefef;border:1px solid #c8c8c8;box-sizing:border-box;box-shadow:inset 0 0 0 1px #f9f9f9;"></div>
<div class="t" style="left:916.30px;top:618.40px;font-size:13px;line-height:17px;color:#6d6d6d;">0,44</div>
<div class="a" style="left:695px;top:664px;width:370px;height:95px;border:1px solid #fff;box-sizing:border-box;"></div>
<div class="a" style="left:694px;top:663px;width:370px;height:95px;border:1px solid #a9a9a9;box-sizing:border-box;"></div>
<div class="a" style="left:710px;top:661px;width:103px;height:6px;background:#eeeeee;"></div>
<div class="t" style="left:716.10px;top:653.60px;font-size:13px;line-height:17px;letter-spacing:-0.425px;">Scaled</div>
<div class="t" style="left:757.20px;top:653.60px;font-size:13px;line-height:17px;letter-spacing:-0.306px;">Print</div>
<div class="t" style="left:786.30px;top:653.60px;font-size:13px;line-height:17px;letter-spacing:-1.047px;">Size</div>
<div class="t" style="left:704.20px;top:682.80px;font-size:13px;line-height:17px;letter-spacing:-0.805px;">Scale:</div>
<div class="t" style="left:805.30px;top:682.80px;font-size:13px;line-height:17px;letter-spacing:-0.313px;">Height:</div>
<div class="t" style="left:906.30px;top:682.80px;font-size:13px;line-height:17px;letter-spacing:-0.057px;">Width:</div>
<div class="a" style="left:704px;top:704px;width:70px;height:20px;background:#fff;border:1px solid #7a7a7a;box-sizing:border-box;"></div>
<div class="t" style="left:710.10px;top:706.00px;font-size:13px;line-height:17px;">100%</div>
<div class="a" style="left:805px;top:704px;width:70px;height:20px;background:#fff;border:1px solid #7a7a7a;box-sizing:border-box;"></div>
<div class="t" style="left:811.00px;top:706.00px;font-size:13px;line-height:17px;">29</div>
<div class="a" style="left:906px;top:704px;width:70px;height:20px;background:#fff;border:1px solid #7a7a7a;box-sizing:border-box;"></div>
<div class="t" style="left:912.00px;top:706.00px;font-size:13px;line-height:17px;">19,43</div>
<div class="a" style="left:704px;top:734px;width:13px;height:13px;background:#fff;border:1px solid #333;box-sizing:border-box;"></div>
<div class="t" style="left:720.40px;top:731.70px;font-size:13px;line-height:17px;letter-spacing:-0.904px;">Scale</div>
<div class="t" style="left:752.30px;top:731.70px;font-size:13px;line-height:17px;letter-spacing:0.579px;">to</div>
<div class="t" style="left:768.20px;top:731.70px;font-size:13px;line-height:17px;letter-spacing:-0.414px;">Fit</div>
<div class="t" style="left:785.30px;top:731.70px;font-size:13px;line-height:17px;letter-spacing:-1.062px;">Media</div>
<div class="t" style="left:831.20px;top:731.70px;font-size:13px;line-height:17px;letter-spacing:-0.266px;">Print</div>
<div class="t" style="left:860.50px;top:731.70px;font-size:13px;line-height:17px;letter-spacing:-0.494px;">Resolution:</div>
<div class="t" style="left:924.00px;top:731.70px;font-size:13px;line-height:17px;letter-spacing:-0.163px;">300</div>
<div class="t" style="left:949.10px;top:731.70px;font-size:13px;line-height:17px;letter-spacing:-0.951px;">PPI</div>
<div class="a" style="left:694px;top:771px;width:13px;height:13px;background:#fff;border:1px solid #333;box-sizing:border-box;"></div>
<div class="t" style="left:710.20px;top:768.60px;font-size:13px;line-height:17px;letter-spacing:-0.346px;">Print</div>
<div class="t" style="left:739.10px;top:768.60px;font-size:13px;line-height:17px;letter-spacing:-0.299px;">Selected</div>
<div class="t" style="left:791.20px;top:768.60px;font-size:13px;line-height:17px;letter-spacing:-0.815px;">Area</div>
<div class="t" style="left:828.10px;top:768.60px;font-size:13px;line-height:17px;letter-spacing:-0.438px;">Units:</div>
<div class="a" style="left:868px;top:767px;width:136px;height:22px;background:#fff;border:1px solid #7a7a7a;box-sizing:border-box;"></div>
<div class="t" style="left:875.40px;top:769.80px;font-size:13px;line-height:17px;letter-spacing:-0.416px;">Centimeters</div>
<svg class="a" style="left:989.6px;top:776.0px" width="10" height="6" viewBox="0 0 10 6"><path d="M1 0.8 L5 4.8 L9 0.8" fill="none" stroke="#444" stroke-width="1.1"/></svg>
<div class="a" style="left:684px;top:807px;width:390px;height:1px;background:#a3a3a3;"></div>
<svg class="a" style="left:690px;top:816px" width="10" height="10" viewBox="0 0 10 10"><path d="M0.2 0.4 H9 L4.6 9 Z" fill="#5c5c5c"/><path d="M0.2 0.6 H9" stroke="#222" stroke-width="1"/></svg>
<div class="t" style="left:707.60px;top:810.80px;font-size:13px;line-height:17px;letter-spacing:0.012px;font-weight:bold;">Printing</div>
<div class="t" style="left:760.70px;top:810.80px;font-size:13px;line-height:17px;letter-spacing:-0.236px;font-weight:bold;">Marks</div>
<div class="a" style="left:694px;top:841px;width:13px;height:13px;background:#fff;border:1px solid #333;box-sizing:border-box;"></div>
<div class="t" style="left:710.20px;top:838.60px;font-size:13px;line-height:17px;letter-spacing:-0.556px;">Corner</div>
<div class="t" style="left:750.50px;top:838.60px;font-size:13px;line-height:17px;letter-spacing:-0.694px;">Crop</div>
<div class="t" style="left:779.80px;top:838.60px;font-size:13px;line-height:17px;letter-spacing:-1.238px;">Marks</div>
<div class="a" style="left:826px;top:840px;width:13px;height:13px;background:#fff;border:1px solid #333;box-sizing:border-box;"></div>
<div class="t" style="left:842.00px;top:837.80px;font-size:13px;line-height:17px;letter-spacing:-0.530px;">Description</div>
<div class="a" style="left:918px;top:836px;width:93px;height:18px;background:#e1e1e1;border:1px solid #adadad;box-sizing:border-box;"></div>
<div class="t" style="left:948.10px;top:836.80px;font-size:13px;line-height:17px;letter-spacing:-0.105px;">Edit...</div>
<div class="a" style="left:694px;top:862px;width:13px;height:13px;background:#fff;border:1px solid #333;box-sizing:border-box;"></div>
<div class="t" style="left:710.20px;top:859.70px;font-size:13px;line-height:17px;letter-spacing:-0.270px;">Center</div>
<div class="t" style="left:751.50px;top:859.70px;font-size:13px;line-height:17px;letter-spacing:-0.794px;">Crop</div>
<div class="t" style="left:780.40px;top:859.70px;font-size:13px;line-height:17px;letter-spacing:-1.178px;">Marks</div>
<div class="a" style="left:826px;top:861px;width:13px;height:13px;background:#fff;border:1px solid #333;box-sizing:border-box;"></div>
<div class="t" style="left:842.00px;top:858.50px;font-size:13px;line-height:17px;letter-spacing:-0.951px;">Labels</div>
<div class="a" style="left:694px;top:883px;width:13px;height:13px;background:#fff;border:1px solid #333;box-sizing:border-box;"></div>
<div class="t" style="left:710.20px;top:880.70px;font-size:13px;line-height:17px;letter-spacing:-0.414px;">Registration</div>
<div class="t" style="left:778.50px;top:880.70px;font-size:13px;line-height:17px;letter-spacing:-1.178px;">Marks</div>
<div class="a" style="left:684px;top:921px;width:390px;height:1px;background:#a3a3a3;"></div>
<svg class="a" style="left:690px;top:930px" width="10" height="10" viewBox="0 0 10 10"><path d="M0.2 0.4 H9 L4.6 9 Z" fill="#5c5c5c"/><path d="M0.2 0.6 H9" stroke="#222" stroke-width="1"/></svg>
<div class="t" style="left:707.60px;top:924.80px;font-size:13px;line-height:17px;letter-spacing:-0.401px;font-weight:bold;">Functions</div>
<div class="a" style="left:694px;top:949px;width:13px;height:13px;background:#fff;border:1px solid #333;box-sizing:border-box;"></div>
<div class="t" style="left:710.20px;top:946.60px;font-size:13px;line-height:17px;letter-spacing:-0.783px;">Emulsion</div>
<div class="t" style="left:761.30px;top:946.60px;font-size:13px;line-height:17px;letter-spacing:-0.584px;">Down</div>
<div class="a" style="left:808px;top:949px;width:13px;height:13px;background:#fff;border:1px solid #333;box-sizing:border-box;"></div>
<div class="t" style="left:824.10px;top:946.60px;font-size:13px;line-height:17px;letter-spacing:-0.501px;">Negative</div>
<div class="a" style="left:695px;top:977px;width:99px;height:18px;background:#e1e1e1;border:1px solid #adadad;box-sizing:border-box;"></div>
<div class="t" style="left:706.20px;top:977.50px;font-size:13px;line-height:17px;letter-spacing:-0.386px;">Background...</div>
<div class="a" style="left:804px;top:977px;width:93px;height:18px;background:#e1e1e1;border:1px solid #adadad;box-sizing:border-box;"></div>
<div class="t" style="left:826.10px;top:977.50px;font-size:13px;line-height:17px;letter-spacing:-0.193px;">Border...</div>
<div class="a" style="left:907px;top:977px;width:93px;height:18px;background:#e1e1e1;border:1px solid #adadad;box-sizing:border-box;"></div>
<div class="t" style="left:932.20px;top:977.50px;font-size:13px;line-height:17px;letter-spacing:-0.361px;">Bleed...</div>
<div class="a" style="left:684px;top:1014px;width:390px;height:1px;background:#a3a3a3;"></div>
<svg class="a" style="left:690px;top:1022px" width="10" height="10" viewBox="0 0 10 10"><path d="M0.4 0.2 V9 L9 4.6 Z" fill="#5c5c5c"/><path d="M0.4 0.4 L9 4.6" stroke="#222" stroke-width="0.9"/></svg>
<div class="t" style="left:707.60px;top:1017.90px;font-size:13px;line-height:17px;letter-spacing:-0.301px;font-weight:bold;">PostScript</div>
<div class="t" style="left:773.50px;top:1017.90px;font-size:13px;line-height:17px;letter-spacing:-0.344px;font-weight:bold;">Options</div>
<div class="a" style="left:766px;top:1047px;width:76px;height:18px;background:#e1e1e1;border:1px solid #adadad;box-sizing:border-box;"></div>
<div class="t" style="left:786.30px;top:1047.70px;font-size:13px;line-height:17px;letter-spacing:-0.911px;">Cancel</div>
<div class="a" style="left:859px;top:1047px;width:76px;height:18px;background:#e1e1e1;border:1px solid #adadad;box-sizing:border-box;"></div>
<div class="t" style="left:881.80px;top:1047.70px;font-size:13px;line-height:17px;letter-spacing:-0.620px;">Done</div>
<div class="a" style="left:952px;top:1047px;width:138px;height:18px;background:#e1e1e1;border:2px solid #0078d7;box-sizing:border-box;"></div>
<div class="t" style="left:1008.20px;top:1047.70px;font-size:13px;line-height:17px;letter-spacing:-0.406px;">Print</div>
<div class="a" style="left:1097px;top:1076.5px;width:2px;height:2.0px;background:#b8b8b8;"></div>
<div class="a" style="left:1094px;top:1079.5px;width:2px;height:2.0px;background:#b8b8b8;"></div>
<div class="a" style="left:1097px;top:1079.5px;width:2px;height:2.0px;background:#b8b8b8;"></div>
<div class="a" style="left:1091px;top:1082.5px;width:2px;height:2.0px;background:#b8b8b8;"></div>
<div class="a" style="left:1094px;top:1082.5px;width:2px;height:2.0px;background:#b8b8b8;"></div>
<div class="a" style="left:1097px;top:1082.5px;width:2px;height:2.0px;background:#b8b8b8;"></div>
<div class="a" style="left:158px;top:1040px;width:13px;height:13px;background:#fff;border:1px solid #333;box-sizing:border-box;"></div>
<div class="t" style="left:174.20px;top:1037.50px;font-size:13px;line-height:17px;letter-spacing:-0.460px;">Match</div>
<div class="t" style="left:211.20px;top:1037.50px;font-size:13px;line-height:17px;letter-spacing:-0.366px;">Print</div>
<div class="t" style="left:240.00px;top:1037.50px;font-size:13px;line-height:17px;letter-spacing:-0.894px;">Colors</div>
<div class="a" style="left:288px;top:1040px;width:13px;height:13px;background:#fff;border:1px solid #bcbcbc;box-sizing:border-box;"></div>
<div class="t" style="left:304.70px;top:1037.50px;font-size:13px;line-height:17px;letter-spacing:-0.623px;color:#929292;">Gamut</div>
<div class="t" style="left:344.50px;top:1037.50px;font-size:13px;line-height:17px;letter-spacing:-0.561px;color:#929292;">Warning</div>
<div class="a" style="left:404px;top:1040px;width:13px;height:13px;background:#fff;border:1px solid #bcbcbc;box-sizing:border-box;"></div>
<div class="t" style="left:420.90px;top:1037.50px;font-size:13px;line-height:17px;letter-spacing:-0.530px;color:#929292;">Show</div>
<div class="t" style="left:455.20px;top:1037.50px;font-size:13px;line-height:17px;letter-spacing:-0.738px;color:#929292;">Paper</div>
<div class="t" style="left:490.10px;top:1037.50px;font-size:13px;line-height:17px;letter-spacing:-0.206px;color:#929292;">White</div>
<div class="a" style="left:638px;top:393px;width:474px;height:138px;background:#eeeeee;border:1px solid #8fbd43;border-right:none;box-sizing:border-box;box-shadow:-1px 2px 10px rgba(0,0,0,0.33);"></div>
<div class="a" style="left:638px;top:393px;width:474px;height:26px;background:#8fbd43;"></div>
<div class="t" style="left:642.20px;top:397.54px;font-size:12px;line-height:16px;letter-spacing:0.026px;">No Color Management is not supported</div>
<svg class="a" style="left:1108px;top:400px" width="4" height="11" viewBox="0 0 4 11"><path d="M2.4 0.5 L7.4 5.5 L2.4 10.5" stroke="#111" stroke-width="1.1" fill="none"/></svg>
<div class="t" style="left:649.70px;top:428.00px;font-size:13px;line-height:17px;letter-spacing:0.588px;">It</div>
<div class="t" style="left:662.00px;top:428.00px;font-size:13px;line-height:17px;letter-spacing:-0.654px;">appears</div>
<div class="t" style="left:708.30px;top:428.00px;font-size:13px;line-height:17px;letter-spacing:0.304px;">that</div>
<div class="t" style="left:735.10px;top:428.00px;font-size:13px;line-height:17px;letter-spacing:-0.253px;">you</div>
<div class="t" style="left:759.20px;top:428.00px;font-size:13px;line-height:17px;letter-spacing:-0.463px;">are</div>
<div class="t" style="left:780.50px;top:428.00px;font-size:13px;line-height:17px;letter-spacing:0.030px;">attempting</div>
<div class="t" style="left:845.40px;top:428.00px;font-size:13px;line-height:17px;letter-spacing:0.729px;">to</div>
<div class="t" style="left:861.60px;top:428.00px;font-size:13px;line-height:17px;letter-spacing:-0.038px;">print</div>
<div class="t" style="left:890.60px;top:428.00px;font-size:13px;line-height:17px;letter-spacing:0.244px;">without</div>
<div class="t" style="left:937.40px;top:428.00px;font-size:13px;line-height:17px;letter-spacing:-0.435px;">color</div>
<div class="t" style="left:967.30px;top:428.00px;font-size:13px;line-height:17px;letter-spacing:-0.390px;">management.</div>
<div class="t" style="left:650.10px;top:447.80px;font-size:13px;line-height:17px;letter-spacing:-0.690px;">This</div>
<div class="t" style="left:675.80px;top:447.80px;font-size:13px;line-height:17px;letter-spacing:-0.044px;">method</div>
<div class="t" style="left:722.80px;top:447.80px;font-size:13px;line-height:17px;letter-spacing:-0.121px;">of</div>
<div class="t" style="left:737.30px;top:447.80px;font-size:13px;line-height:17px;letter-spacing:-0.192px;">printing</div>
<div class="t" style="left:782.30px;top:447.80px;font-size:13px;line-height:17px;letter-spacing:-0.200px;">from</div>
<div class="t" style="left:811.40px;top:447.80px;font-size:13px;line-height:17px;letter-spacing:-0.340px;">Photoshop</div>
<div class="t" style="left:874.40px;top:447.80px;font-size:13px;line-height:17px;letter-spacing:-1.194px;">is</div>
<div class="t" style="left:885.30px;top:447.80px;font-size:13px;line-height:17px;letter-spacing:0.209px;">not</div>
<div class="t" style="left:907.90px;top:447.80px;font-size:13px;line-height:17px;letter-spacing:-0.233px;">supported.</div>
<div class="t" style="left:649.00px;top:467.70px;font-size:13px;line-height:17px;letter-spacing:-0.942px;">Please</div>
<div class="t" style="left:687.00px;top:467.70px;font-size:13px;line-height:17px;letter-spacing:-0.453px;">use</div>
<div class="t" style="left:710.50px;top:467.70px;font-size:13px;line-height:17px;letter-spacing:-0.338px;">Adobe</div>
<div class="t" style="left:750.30px;top:467.70px;font-size:13px;line-height:17px;letter-spacing:-0.733px;">Color</div>
<div class="t" style="left:781.60px;top:467.70px;font-size:13px;line-height:17px;letter-spacing:-0.370px;">Printer</div>
<div class="t" style="left:821.20px;top:467.70px;font-size:13px;line-height:17px;letter-spacing:-0.139px;">Utility</div>
<div class="t" style="left:855.90px;top:467.70px;font-size:13px;line-height:17px;letter-spacing:-0.650px;">if</div>
<div class="t" style="left:865.00px;top:467.70px;font-size:13px;line-height:17px;letter-spacing:-0.220px;">you</div>
<div class="t" style="left:889.20px;top:467.70px;font-size:13px;line-height:17px;letter-spacing:-0.230px;">need</div>
<div class="t" style="left:921.10px;top:467.70px;font-size:13px;line-height:17px;letter-spacing:0.729px;">to</div>
<div class="t" style="left:937.30px;top:467.70px;font-size:13px;line-height:17px;letter-spacing:-0.018px;">print</div>
<div class="t" style="left:966.40px;top:467.70px;font-size:13px;line-height:17px;letter-spacing:0.320px;">with</div>
<div class="t" style="left:994.70px;top:467.70px;font-size:13px;line-height:17px;letter-spacing:-0.959px;">No</div>
<div class="t" style="left:1013.30px;top:467.70px;font-size:13px;line-height:17px;letter-spacing:-0.713px;">Color</div>
<div class="t" style="left:1044.70px;top:467.70px;font-size:13px;line-height:17px;letter-spacing:-0.608px;">Management.</div>
<div class="a" style="left:957px;top:501px;width:76px;height:18px;background:#e1e1e1;border:2px solid #0078d7;box-sizing:border-box;"></div>
<div class="t" style="left:978.70px;top:501.90px;font-size:13px;line-height:17px;letter-spacing:0.102px;">Get It</div>
<div class="a" style="left:1043px;top:501px;width:71px;height:18px;background:#e1e1e1;border:1px solid #adadad;box-sizing:border-box;"></div>
<div class="t" style="left:1063.60px;top:501.50px;font-size:13px;line-height:17px;letter-spacing:-0.978px;">Cancel</div>
<div class="a" style="left:1112px;top:380px;width:6px;height:160px;background:#fff;"></div>
<svg class="a" style="left:0;top:0" width="1118" height="1085" viewBox="0 0 1118 1085"><path d="M1102.5 494.8 C1108 495.6 1113 497 1119 499 M1119 500 C1110 497.2 1098 494.2 1086.7 492.3 C1078 490.8 1072 490.2 1067 489.8 C1058 489 1049 487.6 1040.5 488.4 C1035 489 1030.5 489.8 1027.7 491.8 C1025.2 493.4 1023.9 495 1023.7 496.7 C1023.4 498 1023.4 499.4 1023.7 500.7 C1024.3 503.6 1025.7 506 1027.7 508.5 C1030.3 511.5 1033.6 513.6 1037.5 515.4 C1042.2 517.8 1047 519.7 1052.3 521.3 C1057 522.9 1062 524.6 1067 525.3 C1072 526 1077 526.1 1081.8 525.8 C1087 525.5 1092 525.1 1096.6 523.8 C1100.4 522.8 1103.6 521.4 1106.4 519.4 C1108.8 517.7 1110.4 515.4 1112.3 513.5 C1114 511.7 1116.5 510.3 1119 508.3" fill="none" stroke="#e8141e" stroke-width="2" stroke-linecap="round" stroke-linejoin="round"/></svg>
</body></html>
